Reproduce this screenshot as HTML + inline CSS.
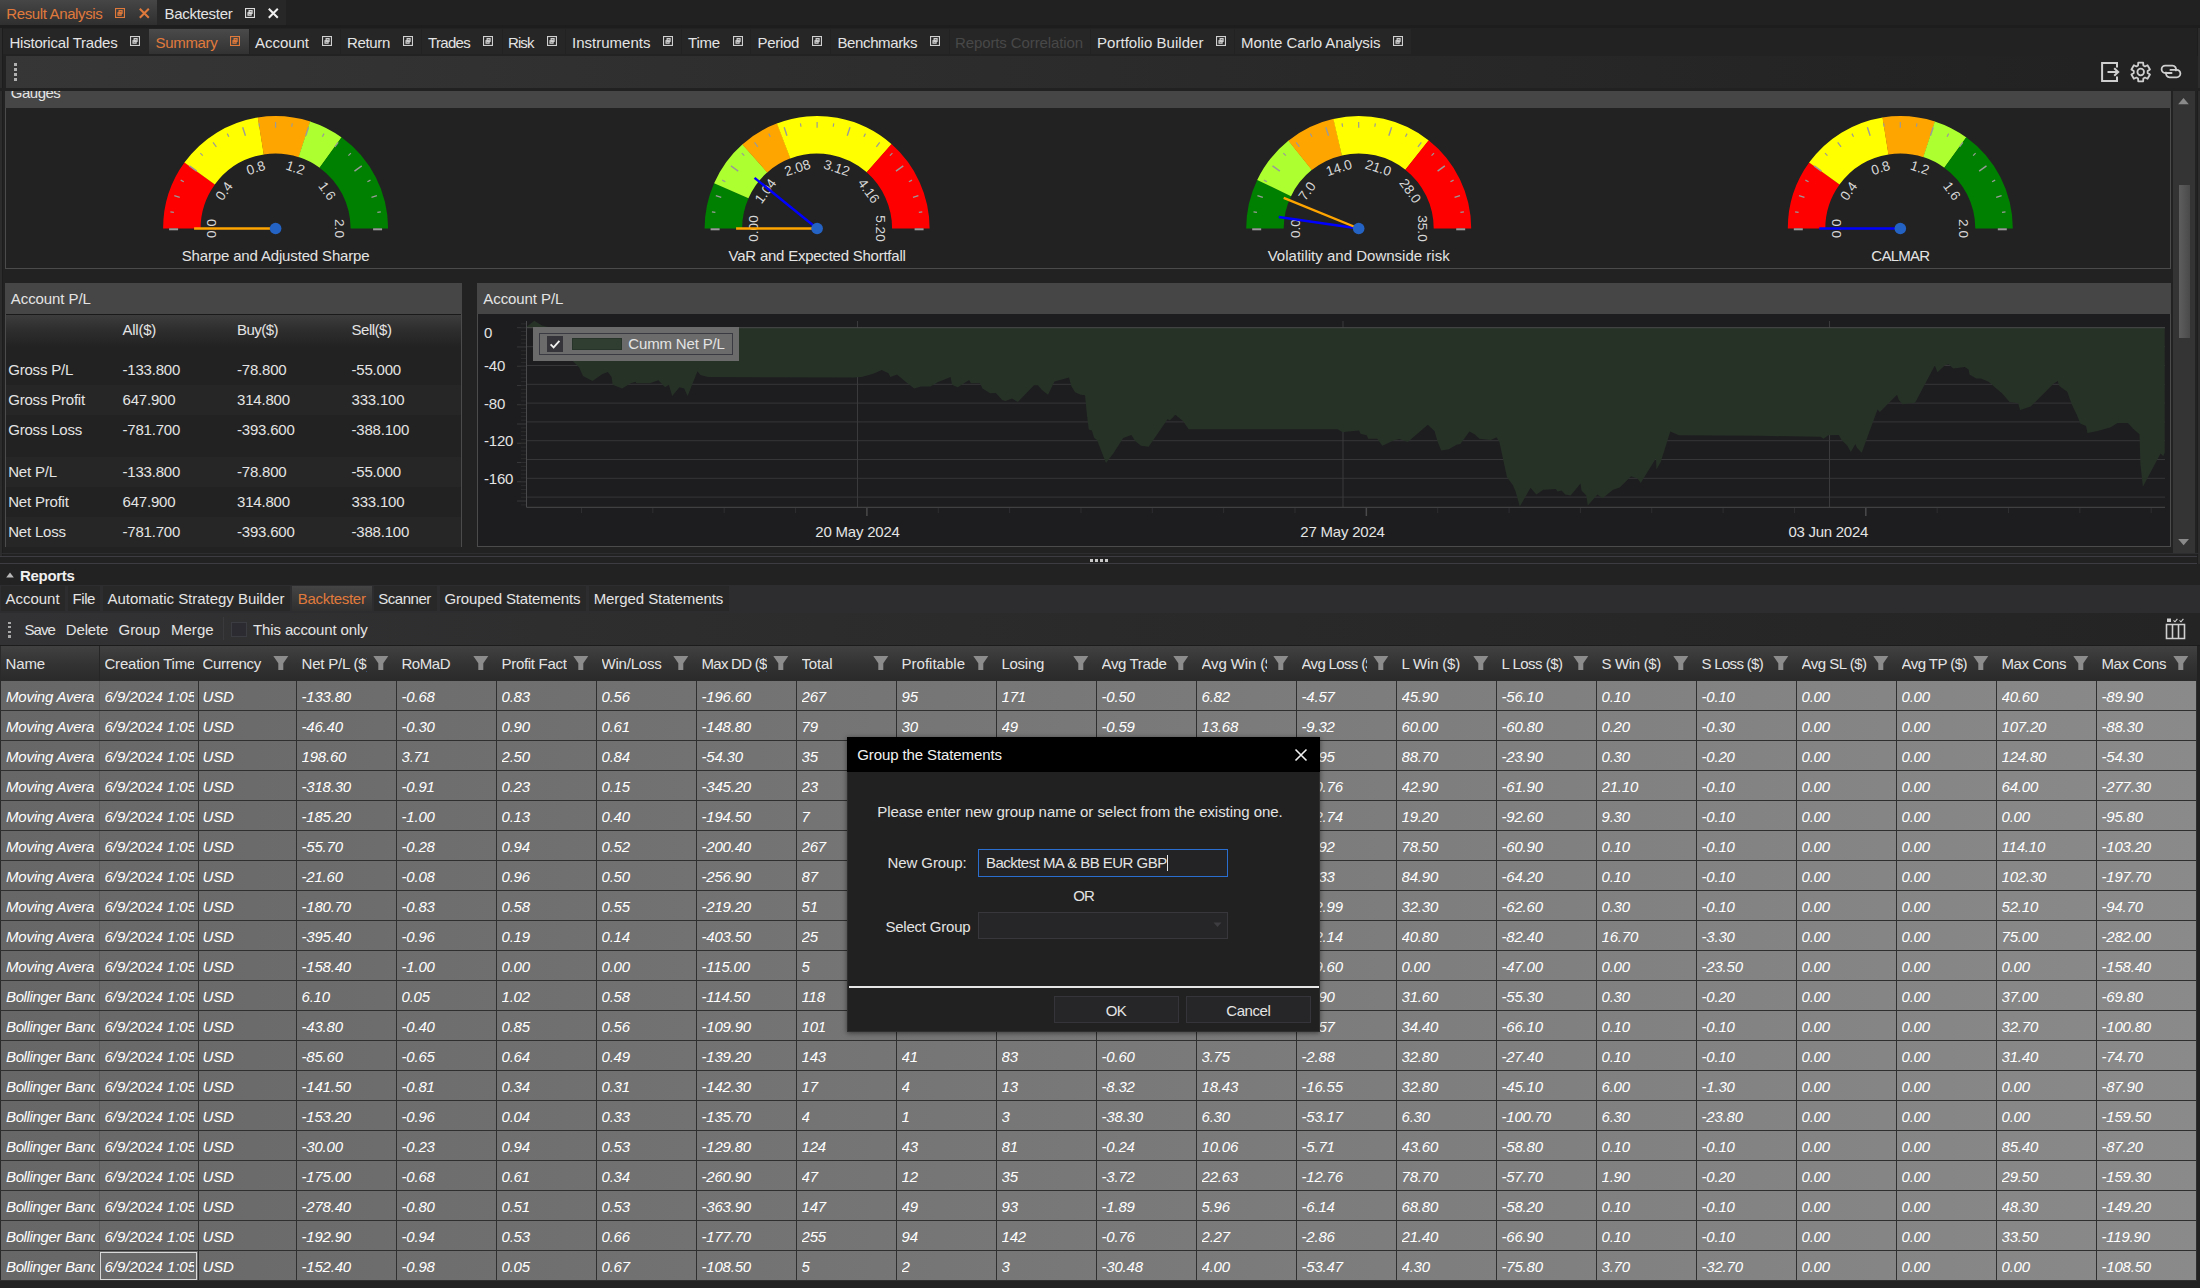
<!DOCTYPE html>
<html><head><meta charset="utf-8"><title>Result Analysis</title>
<style>
html,body{margin:0;padding:0}
body{width:2200px;height:1288px;position:relative;overflow:hidden;background:#222;font-family:"Liberation Sans",sans-serif;font-size:15px;color:#e4e4e4}
.a{position:absolute;display:block}
.t{position:absolute;white-space:pre;line-height:20px;height:20px}
</style></head><body>
<div class="a" style="left:0px;top:0px;width:2200px;height:26px;background:#212121;"></div>
<div class="a" style="left:0px;top:0px;width:157px;height:24.5px;background:linear-gradient(#464646,#2f2f2f);"></div>
<div class="a" style="left:157px;top:0px;width:129px;height:24.5px;background:#272727;"></div>
<div class="a" style="left:0px;top:24.5px;width:2200px;height:3.5px;background:#1d1d1d;"></div>
<div class="t" style="left:6.20px;top:3.60px;font-size:15px;letter-spacing:-0.361px;color:#e07a3c;">Result Analysis</div>
<svg class="a" style="left:115px;top:8px" width="10" height="10" viewBox="0 0 10 10"><rect x="0.55" y="0.55" width="8.9" height="8.9" fill="none" stroke="#e07a3c" stroke-width="1.1"/><rect x="4.1" y="2.6" width="3" height="2.8" fill="#e07a3c" fill-opacity="0.35" stroke="#e07a3c" stroke-width="1.15"/><rect x="3" y="4.7" width="3.1" height="2.5" fill="#e07a3c" fill-opacity="0.35" stroke="#e07a3c" stroke-width="1.15"/></svg>
<svg class="a" style="left:138.7px;top:7.8px" width="11" height="11" viewBox="0 0 11 11"><path d="M0.8 0.8L9.8 9.8M9.8 0.8L0.8 9.8" stroke="#e07a3c" stroke-width="2" fill="none"/></svg>
<div class="t" style="left:164.60px;top:3.60px;font-size:15px;letter-spacing:-0.306px;">Backtester</div>
<svg class="a" style="left:245px;top:8px" width="10" height="10" viewBox="0 0 10 10"><rect x="0.55" y="0.55" width="8.9" height="8.9" fill="none" stroke="#dcdcdc" stroke-width="1.1"/><rect x="4.1" y="2.6" width="3" height="2.8" fill="#dcdcdc" fill-opacity="0.35" stroke="#dcdcdc" stroke-width="1.15"/><rect x="3" y="4.7" width="3.1" height="2.5" fill="#dcdcdc" fill-opacity="0.35" stroke="#dcdcdc" stroke-width="1.15"/></svg>
<svg class="a" style="left:267.7px;top:7.8px" width="11" height="11" viewBox="0 0 11 11"><path d="M0.8 0.8L9.8 9.8M9.8 0.8L0.8 9.8" stroke="#f0f0f0" stroke-width="2" fill="none"/></svg>
<div class="a" style="left:0px;top:28px;width:2200px;height:28px;background:#222;"></div>
<div class="a" style="left:0px;top:28px;width:2px;height:528px;background:#2c2c2c;"></div>
<div class="a" style="left:2px;top:28px;width:1px;height:528px;background:#1d1d1d;"></div>
<div class="a" style="left:2197px;top:28px;width:1px;height:536px;background:#1d1d1d;"></div>
<div class="a" style="left:2198px;top:28px;width:2px;height:536px;background:#2c2c2c;"></div>
<div class="a" style="left:3px;top:29px;width:145.5px;height:25px;background:#262626;"></div>
<div class="t" style="left:9.50px;top:32.80px;font-size:15px;letter-spacing:-0.218px;">Historical Trades</div>
<svg class="a" style="left:130px;top:36px" width="10" height="10" viewBox="0 0 10 10"><rect x="0.55" y="0.55" width="8.9" height="8.9" fill="none" stroke="#d0d0d0" stroke-width="1.1"/><rect x="4.1" y="2.6" width="3" height="2.8" fill="#d0d0d0" fill-opacity="0.35" stroke="#d0d0d0" stroke-width="1.15"/><rect x="3" y="4.7" width="3.1" height="2.5" fill="#d0d0d0" fill-opacity="0.35" stroke="#d0d0d0" stroke-width="1.15"/></svg>
<div class="a" style="left:149px;top:29px;width:99.5px;height:25px;background:linear-gradient(#4a4a4a,#323232);"></div>
<div class="t" style="left:155.50px;top:32.80px;font-size:15px;letter-spacing:-0.311px;color:#e07a3c;">Summary</div>
<svg class="a" style="left:230px;top:36px" width="10" height="10" viewBox="0 0 10 10"><rect x="0.55" y="0.55" width="8.9" height="8.9" fill="none" stroke="#e07a3c" stroke-width="1.1"/><rect x="4.1" y="2.6" width="3" height="2.8" fill="#e07a3c" fill-opacity="0.35" stroke="#e07a3c" stroke-width="1.15"/><rect x="3" y="4.7" width="3.1" height="2.5" fill="#e07a3c" fill-opacity="0.35" stroke="#e07a3c" stroke-width="1.15"/></svg>
<div class="a" style="left:249.5px;top:29px;width:90.5px;height:25px;background:#262626;"></div>
<div class="t" style="left:255.00px;top:32.80px;font-size:15px;letter-spacing:-0.029px;">Account</div>
<svg class="a" style="left:321.5px;top:36px" width="10" height="10" viewBox="0 0 10 10"><rect x="0.55" y="0.55" width="8.9" height="8.9" fill="none" stroke="#d0d0d0" stroke-width="1.1"/><rect x="4.1" y="2.6" width="3" height="2.8" fill="#d0d0d0" fill-opacity="0.35" stroke="#d0d0d0" stroke-width="1.15"/><rect x="3" y="4.7" width="3.1" height="2.5" fill="#d0d0d0" fill-opacity="0.35" stroke="#d0d0d0" stroke-width="1.15"/></svg>
<div class="a" style="left:341px;top:29px;width:80px;height:25px;background:#262626;"></div>
<div class="t" style="left:347.00px;top:32.80px;font-size:15px;letter-spacing:-0.337px;">Return</div>
<svg class="a" style="left:403px;top:36px" width="10" height="10" viewBox="0 0 10 10"><rect x="0.55" y="0.55" width="8.9" height="8.9" fill="none" stroke="#d0d0d0" stroke-width="1.1"/><rect x="4.1" y="2.6" width="3" height="2.8" fill="#d0d0d0" fill-opacity="0.35" stroke="#d0d0d0" stroke-width="1.15"/><rect x="3" y="4.7" width="3.1" height="2.5" fill="#d0d0d0" fill-opacity="0.35" stroke="#d0d0d0" stroke-width="1.15"/></svg>
<div class="a" style="left:422px;top:29px;width:79.5px;height:25px;background:#262626;"></div>
<div class="t" style="left:428.00px;top:32.80px;font-size:15px;letter-spacing:-0.688px;">Trades</div>
<svg class="a" style="left:483px;top:36px" width="10" height="10" viewBox="0 0 10 10"><rect x="0.55" y="0.55" width="8.9" height="8.9" fill="none" stroke="#d0d0d0" stroke-width="1.1"/><rect x="4.1" y="2.6" width="3" height="2.8" fill="#d0d0d0" fill-opacity="0.35" stroke="#d0d0d0" stroke-width="1.15"/><rect x="3" y="4.7" width="3.1" height="2.5" fill="#d0d0d0" fill-opacity="0.35" stroke="#d0d0d0" stroke-width="1.15"/></svg>
<div class="a" style="left:502.5px;top:29px;width:62.5px;height:25px;background:#262626;"></div>
<div class="t" style="left:508.00px;top:32.80px;font-size:15px;letter-spacing:-0.916px;">Risk</div>
<svg class="a" style="left:546.5px;top:36px" width="10" height="10" viewBox="0 0 10 10"><rect x="0.55" y="0.55" width="8.9" height="8.9" fill="none" stroke="#d0d0d0" stroke-width="1.1"/><rect x="4.1" y="2.6" width="3" height="2.8" fill="#d0d0d0" fill-opacity="0.35" stroke="#d0d0d0" stroke-width="1.15"/><rect x="3" y="4.7" width="3.1" height="2.5" fill="#d0d0d0" fill-opacity="0.35" stroke="#d0d0d0" stroke-width="1.15"/></svg>
<div class="a" style="left:566px;top:29px;width:115px;height:25px;background:#262626;"></div>
<div class="t" style="left:572.00px;top:32.80px;font-size:15px;letter-spacing:0.012px;">Instruments</div>
<svg class="a" style="left:663px;top:36px" width="10" height="10" viewBox="0 0 10 10"><rect x="0.55" y="0.55" width="8.9" height="8.9" fill="none" stroke="#d0d0d0" stroke-width="1.1"/><rect x="4.1" y="2.6" width="3" height="2.8" fill="#d0d0d0" fill-opacity="0.35" stroke="#d0d0d0" stroke-width="1.15"/><rect x="3" y="4.7" width="3.1" height="2.5" fill="#d0d0d0" fill-opacity="0.35" stroke="#d0d0d0" stroke-width="1.15"/></svg>
<div class="a" style="left:682px;top:29px;width:68px;height:25px;background:#262626;"></div>
<div class="t" style="left:688.00px;top:32.80px;font-size:15px;letter-spacing:-0.194px;">Time</div>
<svg class="a" style="left:733px;top:36px" width="10" height="10" viewBox="0 0 10 10"><rect x="0.55" y="0.55" width="8.9" height="8.9" fill="none" stroke="#d0d0d0" stroke-width="1.1"/><rect x="4.1" y="2.6" width="3" height="2.8" fill="#d0d0d0" fill-opacity="0.35" stroke="#d0d0d0" stroke-width="1.15"/><rect x="3" y="4.7" width="3.1" height="2.5" fill="#d0d0d0" fill-opacity="0.35" stroke="#d0d0d0" stroke-width="1.15"/></svg>
<div class="a" style="left:751px;top:29px;width:79px;height:25px;background:#262626;"></div>
<div class="t" style="left:757.50px;top:32.80px;font-size:15px;letter-spacing:-0.310px;">Period</div>
<svg class="a" style="left:811.5px;top:36px" width="10" height="10" viewBox="0 0 10 10"><rect x="0.55" y="0.55" width="8.9" height="8.9" fill="none" stroke="#d0d0d0" stroke-width="1.1"/><rect x="4.1" y="2.6" width="3" height="2.8" fill="#d0d0d0" fill-opacity="0.35" stroke="#d0d0d0" stroke-width="1.15"/><rect x="3" y="4.7" width="3.1" height="2.5" fill="#d0d0d0" fill-opacity="0.35" stroke="#d0d0d0" stroke-width="1.15"/></svg>
<div class="a" style="left:831px;top:29px;width:117.5px;height:25px;background:#262626;"></div>
<div class="t" style="left:837.50px;top:32.80px;font-size:15px;letter-spacing:-0.387px;">Benchmarks</div>
<svg class="a" style="left:930px;top:36px" width="10" height="10" viewBox="0 0 10 10"><rect x="0.55" y="0.55" width="8.9" height="8.9" fill="none" stroke="#d0d0d0" stroke-width="1.1"/><rect x="4.1" y="2.6" width="3" height="2.8" fill="#d0d0d0" fill-opacity="0.35" stroke="#d0d0d0" stroke-width="1.15"/><rect x="3" y="4.7" width="3.1" height="2.5" fill="#d0d0d0" fill-opacity="0.35" stroke="#d0d0d0" stroke-width="1.15"/></svg>
<div class="a" style="left:949.5px;top:29px;width:140.5px;height:25px;background:#262626;"></div>
<div class="t" style="left:955.00px;top:32.80px;font-size:15px;letter-spacing:-0.108px;color:#484848;">Reports Correlation</div>
<div class="a" style="left:1091px;top:29px;width:142.5px;height:25px;background:#262626;"></div>
<div class="t" style="left:1097.00px;top:32.80px;font-size:15px;letter-spacing:0.036px;">Portfolio Builder</div>
<svg class="a" style="left:1216px;top:36px" width="10" height="10" viewBox="0 0 10 10"><rect x="0.55" y="0.55" width="8.9" height="8.9" fill="none" stroke="#d0d0d0" stroke-width="1.1"/><rect x="4.1" y="2.6" width="3" height="2.8" fill="#d0d0d0" fill-opacity="0.35" stroke="#d0d0d0" stroke-width="1.15"/><rect x="3" y="4.7" width="3.1" height="2.5" fill="#d0d0d0" fill-opacity="0.35" stroke="#d0d0d0" stroke-width="1.15"/></svg>
<div class="a" style="left:1234.5px;top:29px;width:176.5px;height:25px;background:#262626;"></div>
<div class="t" style="left:1241.00px;top:32.80px;font-size:15px;letter-spacing:-0.070px;">Monte Carlo Analysis</div>
<svg class="a" style="left:1393px;top:36px" width="10" height="10" viewBox="0 0 10 10"><rect x="0.55" y="0.55" width="8.9" height="8.9" fill="none" stroke="#d0d0d0" stroke-width="1.1"/><rect x="4.1" y="2.6" width="3" height="2.8" fill="#d0d0d0" fill-opacity="0.35" stroke="#d0d0d0" stroke-width="1.15"/><rect x="3" y="4.7" width="3.1" height="2.5" fill="#d0d0d0" fill-opacity="0.35" stroke="#d0d0d0" stroke-width="1.15"/></svg>
<div class="a" style="left:6px;top:56px;width:2192px;height:32px;background:linear-gradient(to right,#363636 0%,#2f2f2f 30%,#292929 60%,#222 95%);"></div>
<div class="a" style="left:14.1px;top:63.2px;width:2.6px;height:2.6px;background:#b0b0b0;"></div>
<div class="a" style="left:14.1px;top:68.15px;width:2.6px;height:2.6px;background:#b0b0b0;"></div>
<div class="a" style="left:14.1px;top:73.1px;width:2.6px;height:2.6px;background:#b0b0b0;"></div>
<div class="a" style="left:14.1px;top:78.05px;width:2.6px;height:2.6px;background:#b0b0b0;"></div>
<div class="a" style="left:0px;top:88px;width:2200px;height:3px;background:#212121;"></div>
<svg class="a" style="left:2098px;top:59px" width="26" height="26" viewBox="0 0 26 26"><path d="M19 8.5V4.1H4.1V21.9H19V17.5" fill="none" stroke="#cfcfcf" stroke-width="2"/><path d="M9.5 13H20M16.2 9.2L20.2 13L16.2 16.8" fill="none" stroke="#cfcfcf" stroke-width="2"/></svg>
<svg class="a" style="left:2128px;top:59px" width="26" height="26" viewBox="0 0 26 26"><path d="M10.23 3.72L15.17 3.72L15.36 6.53L16.98 7.46L19.50 6.22L21.97 10.50L19.64 12.07L19.64 13.93L21.97 15.50L19.50 19.78L16.98 18.54L15.36 19.47L15.17 22.28L10.23 22.28L10.04 19.47L8.42 18.54L5.90 19.78L3.43 15.50L5.76 13.93L5.76 12.07L3.43 10.50L5.90 6.22L8.42 7.46L10.04 6.53Z" fill="none" stroke="#cfcfcf" stroke-width="1.8" stroke-linejoin="round"/><circle cx="12.7" cy="13" r="3.3" fill="none" stroke="#cfcfcf" stroke-width="1.8"/></svg>
<svg class="a" style="left:2158px;top:60px" width="28" height="24" viewBox="0 0 28 24"><path d="M13.6 13H7.3a3.7 3.7 0 0 1 0-7.4h7.1a3.7 3.7 0 0 1 3.5 4.8" fill="none" stroke="#cfcfcf" stroke-width="1.8" stroke-linecap="round"/><path d="M12.4 9.9H18.7a3.7 3.7 0 0 1 0 7.4h-7.1a3.7 3.7 0 0 1-3.5-4.8" fill="none" stroke="#cfcfcf" stroke-width="1.8" stroke-linecap="round"/></svg>
<div class="a" style="left:5px;top:91px;width:2166px;height:177.5px;background:#222;border:1px solid #4b4b4b;box-sizing:border-box;border-top:none"></div>
<div class="a" style="left:5px;top:91px;width:2166px;height:17px;background:#464646;"></div>
<div class="a" style="left:5px;top:91px;width:300px;height:17px;overflow:hidden">
<div class="t" style="left:5.80px;top:-7.60px;font-size:15px;letter-spacing:-0.506px;">Gauges</div>
</div>
<svg class="a" style="left:0;top:100px;font-family:'Liberation Sans'" width="2200" height="170" viewBox="0 100 2200 170">
<path d="M163.10 228.50A112.5 112.5 0 0 1 184.59 162.37L214.92 184.42A75 75 0 0 0 200.60 228.50Z" fill="#ff0000"/><path d="M184.41 162.61A112.5 112.5 0 0 1 258.00 117.39L263.87 154.42A75 75 0 0 0 214.81 184.58Z" fill="#ffff00"/><path d="M257.71 117.43A112.5 112.5 0 0 1 310.36 121.51L298.78 157.17A75 75 0 0 0 263.67 154.45Z" fill="#ffa500"/><path d="M310.08 121.42A112.5 112.5 0 0 1 341.73 137.49L319.68 167.82A75 75 0 0 0 298.59 157.11Z" fill="#adff2f"/><path d="M341.49 137.31A112.5 112.5 0 0 1 388.10 228.50L350.60 228.50A75 75 0 0 0 319.52 167.71Z" fill="#008000"/><path d="M178.10 229.30L169.10 229.30" stroke="#9a9a9a" stroke-width="2"/><path d="M173.87 212.39L170.41 211.84" stroke="#9a9a9a" stroke-width="1.2"/><path d="M179.73 197.35L174.31 195.59" stroke="#9a9a9a" stroke-width="1.2"/><path d="M183.83 181.74L180.71 180.15" stroke="#9a9a9a" stroke-width="1.2"/><path d="M196.72 171.19L189.44 165.90" stroke="#9a9a9a" stroke-width="1.4"/><path d="M202.77 155.67L200.29 153.19" stroke="#9a9a9a" stroke-width="1.2"/><path d="M216.35 146.95L213.00 142.34" stroke="#9a9a9a" stroke-width="1.2"/><path d="M228.84 136.73L227.25 133.61" stroke="#9a9a9a" stroke-width="1.2"/><path d="M245.47 135.77L242.69 127.21" stroke="#9a9a9a" stroke-width="1.4"/><path d="M259.49 126.77L258.94 123.31" stroke="#9a9a9a" stroke-width="1.2"/><path d="M275.60 127.70L275.60 122.00" stroke="#9a9a9a" stroke-width="1.2"/><path d="M291.71 126.77L292.26 123.31" stroke="#9a9a9a" stroke-width="1.2"/><path d="M305.73 135.77L308.51 127.21" stroke="#9a9a9a" stroke-width="1.4"/><path d="M322.36 136.73L323.95 133.61" stroke="#9a9a9a" stroke-width="1.2"/><path d="M334.85 146.95L338.20 142.34" stroke="#9a9a9a" stroke-width="1.2"/><path d="M348.43 155.67L350.91 153.19" stroke="#9a9a9a" stroke-width="1.2"/><path d="M354.48 171.19L361.76 165.90" stroke="#9a9a9a" stroke-width="1.4"/><path d="M367.37 181.74L370.49 180.15" stroke="#9a9a9a" stroke-width="1.2"/><path d="M371.47 197.35L376.89 195.59" stroke="#9a9a9a" stroke-width="1.2"/><path d="M377.33 212.39L380.79 211.84" stroke="#9a9a9a" stroke-width="1.2"/><path d="M373.10 229.30L382.10 229.30" stroke="#9a9a9a" stroke-width="2"/><text x="211.60" y="228.50" transform="rotate(-90 211.60 228.50)" text-anchor="middle" font-size="13.6" fill="#d8d8d8" dy="4.9">0.0</text><text x="223.82" y="190.88" transform="rotate(-54 223.82 190.88)" text-anchor="middle" font-size="13.6" fill="#d8d8d8" dy="4.9">0.4</text><text x="255.82" y="167.63" transform="rotate(-18 255.82 167.63)" text-anchor="middle" font-size="13.6" fill="#d8d8d8" dy="4.9">0.8</text><text x="295.38" y="167.63" transform="rotate(18 295.38 167.63)" text-anchor="middle" font-size="13.6" fill="#d8d8d8" dy="4.9">1.2</text><text x="327.38" y="190.88" transform="rotate(54 327.38 190.88)" text-anchor="middle" font-size="13.6" fill="#d8d8d8" dy="4.9">1.6</text><text x="339.60" y="228.50" transform="rotate(90 339.60 228.50)" text-anchor="middle" font-size="13.6" fill="#d8d8d8" dy="4.9">2.0</text><path d="M275.60 228.50L194.10 228.50" stroke="#ffa500" stroke-width="2.4"/><circle cx="275.6" cy="228.5" r="5.8" fill="#2463c4"/>
<path d="M704.60 228.50A112.5 112.5 0 0 1 714.23 182.95L748.52 198.13A75 75 0 0 0 742.10 228.50Z" fill="#008000"/><path d="M714.12 183.22A112.5 112.5 0 0 1 742.50 144.29L767.37 172.36A75 75 0 0 0 748.44 198.31Z" fill="#adff2f"/><path d="M742.28 144.49A112.5 112.5 0 0 1 777.21 123.31L790.50 158.37A75 75 0 0 0 767.22 172.49Z" fill="#ffa500"/><path d="M776.93 123.42A112.5 112.5 0 0 1 891.70 144.29L866.83 172.36A75 75 0 0 0 790.32 158.44Z" fill="#ffff00"/><path d="M891.48 144.10A112.5 112.5 0 0 1 929.60 228.50L892.10 228.50A75 75 0 0 0 866.69 172.23Z" fill="#ff0000"/><path d="M719.60 229.30L710.60 229.30" stroke="#9a9a9a" stroke-width="2"/><path d="M715.37 212.39L711.91 211.84" stroke="#9a9a9a" stroke-width="1.2"/><path d="M721.23 197.35L715.81 195.59" stroke="#9a9a9a" stroke-width="1.2"/><path d="M725.33 181.74L722.21 180.15" stroke="#9a9a9a" stroke-width="1.2"/><path d="M738.22 171.19L730.94 165.90" stroke="#9a9a9a" stroke-width="1.4"/><path d="M744.27 155.67L741.79 153.19" stroke="#9a9a9a" stroke-width="1.2"/><path d="M757.85 146.95L754.50 142.34" stroke="#9a9a9a" stroke-width="1.2"/><path d="M770.34 136.73L768.75 133.61" stroke="#9a9a9a" stroke-width="1.2"/><path d="M786.97 135.77L784.19 127.21" stroke="#9a9a9a" stroke-width="1.4"/><path d="M800.99 126.77L800.44 123.31" stroke="#9a9a9a" stroke-width="1.2"/><path d="M817.10 127.70L817.10 122.00" stroke="#9a9a9a" stroke-width="1.2"/><path d="M833.21 126.77L833.76 123.31" stroke="#9a9a9a" stroke-width="1.2"/><path d="M847.23 135.77L850.01 127.21" stroke="#9a9a9a" stroke-width="1.4"/><path d="M863.86 136.73L865.45 133.61" stroke="#9a9a9a" stroke-width="1.2"/><path d="M876.35 146.95L879.70 142.34" stroke="#9a9a9a" stroke-width="1.2"/><path d="M889.93 155.67L892.41 153.19" stroke="#9a9a9a" stroke-width="1.2"/><path d="M895.98 171.19L903.26 165.90" stroke="#9a9a9a" stroke-width="1.4"/><path d="M908.87 181.74L911.99 180.15" stroke="#9a9a9a" stroke-width="1.2"/><path d="M912.97 197.35L918.39 195.59" stroke="#9a9a9a" stroke-width="1.2"/><path d="M918.83 212.39L922.29 211.84" stroke="#9a9a9a" stroke-width="1.2"/><path d="M914.60 229.30L923.60 229.30" stroke="#9a9a9a" stroke-width="2"/><text x="753.10" y="228.50" transform="rotate(-90 753.10 228.50)" text-anchor="middle" font-size="13.6" fill="#d8d8d8" dy="4.9">0.00</text><text x="765.32" y="190.88" transform="rotate(-54 765.32 190.88)" text-anchor="middle" font-size="13.6" fill="#d8d8d8" dy="4.9">1.04</text><text x="797.32" y="167.63" transform="rotate(-18 797.32 167.63)" text-anchor="middle" font-size="13.6" fill="#d8d8d8" dy="4.9">2.08</text><text x="836.88" y="167.63" transform="rotate(18 836.88 167.63)" text-anchor="middle" font-size="13.6" fill="#d8d8d8" dy="4.9">3.12</text><text x="868.88" y="190.88" transform="rotate(54 868.88 190.88)" text-anchor="middle" font-size="13.6" fill="#d8d8d8" dy="4.9">4.16</text><text x="881.10" y="228.50" transform="rotate(90 881.10 228.50)" text-anchor="middle" font-size="13.6" fill="#d8d8d8" dy="4.9">5.20</text><path d="M817.10 228.50L736.10 228.50" stroke="#ffa500" stroke-width="2.4"/><path d="M817.10 228.50L754.54 177.84" stroke="#0000ff" stroke-width="2.4"/><circle cx="817.1" cy="228.5" r="5.8" fill="#2463c4"/>
<path d="M1246.20 228.50A112.5 112.5 0 0 1 1257.34 179.69L1291.13 195.96A75 75 0 0 0 1283.70 228.50Z" fill="#008000"/><path d="M1257.21 179.95A112.5 112.5 0 0 1 1288.56 140.54L1311.94 169.86A75 75 0 0 0 1291.04 196.14Z" fill="#adff2f"/><path d="M1288.33 140.73A112.5 112.5 0 0 1 1333.67 118.82L1342.01 155.38A75 75 0 0 0 1311.78 169.99Z" fill="#ffa500"/><path d="M1333.38 118.89A112.5 112.5 0 0 1 1428.84 140.54L1405.46 169.86A75 75 0 0 0 1341.82 155.42Z" fill="#ffff00"/><path d="M1428.61 140.36A112.5 112.5 0 0 1 1471.20 228.50L1433.70 228.50A75 75 0 0 0 1405.31 169.74Z" fill="#ff0000"/><path d="M1261.20 229.30L1252.20 229.30" stroke="#9a9a9a" stroke-width="2"/><path d="M1256.97 212.39L1253.51 211.84" stroke="#9a9a9a" stroke-width="1.2"/><path d="M1262.83 197.35L1257.41 195.59" stroke="#9a9a9a" stroke-width="1.2"/><path d="M1266.93 181.74L1263.81 180.15" stroke="#9a9a9a" stroke-width="1.2"/><path d="M1279.82 171.19L1272.54 165.90" stroke="#9a9a9a" stroke-width="1.4"/><path d="M1285.87 155.67L1283.39 153.19" stroke="#9a9a9a" stroke-width="1.2"/><path d="M1299.45 146.95L1296.10 142.34" stroke="#9a9a9a" stroke-width="1.2"/><path d="M1311.94 136.73L1310.35 133.61" stroke="#9a9a9a" stroke-width="1.2"/><path d="M1328.57 135.77L1325.79 127.21" stroke="#9a9a9a" stroke-width="1.4"/><path d="M1342.59 126.77L1342.04 123.31" stroke="#9a9a9a" stroke-width="1.2"/><path d="M1358.70 127.70L1358.70 122.00" stroke="#9a9a9a" stroke-width="1.2"/><path d="M1374.81 126.77L1375.36 123.31" stroke="#9a9a9a" stroke-width="1.2"/><path d="M1388.83 135.77L1391.61 127.21" stroke="#9a9a9a" stroke-width="1.4"/><path d="M1405.46 136.73L1407.05 133.61" stroke="#9a9a9a" stroke-width="1.2"/><path d="M1417.95 146.95L1421.30 142.34" stroke="#9a9a9a" stroke-width="1.2"/><path d="M1431.53 155.67L1434.01 153.19" stroke="#9a9a9a" stroke-width="1.2"/><path d="M1437.58 171.19L1444.86 165.90" stroke="#9a9a9a" stroke-width="1.4"/><path d="M1450.47 181.74L1453.59 180.15" stroke="#9a9a9a" stroke-width="1.2"/><path d="M1454.57 197.35L1459.99 195.59" stroke="#9a9a9a" stroke-width="1.2"/><path d="M1460.43 212.39L1463.89 211.84" stroke="#9a9a9a" stroke-width="1.2"/><path d="M1456.20 229.30L1465.20 229.30" stroke="#9a9a9a" stroke-width="2"/><text x="1294.70" y="228.50" transform="rotate(-90 1294.70 228.50)" text-anchor="middle" font-size="13.6" fill="#d8d8d8" dy="4.9">0.0</text><text x="1306.92" y="190.88" transform="rotate(-54 1306.92 190.88)" text-anchor="middle" font-size="13.6" fill="#d8d8d8" dy="4.9">7.0</text><text x="1338.92" y="167.63" transform="rotate(-18 1338.92 167.63)" text-anchor="middle" font-size="13.6" fill="#d8d8d8" dy="4.9">14.0</text><text x="1378.48" y="167.63" transform="rotate(18 1378.48 167.63)" text-anchor="middle" font-size="13.6" fill="#d8d8d8" dy="4.9">21.0</text><text x="1410.48" y="190.88" transform="rotate(54 1410.48 190.88)" text-anchor="middle" font-size="13.6" fill="#d8d8d8" dy="4.9">28.0</text><text x="1422.70" y="228.50" transform="rotate(90 1422.70 228.50)" text-anchor="middle" font-size="13.6" fill="#d8d8d8" dy="4.9">35.0</text><path d="M1358.70 228.50L1278.73 216.98" stroke="#0000ff" stroke-width="2.4"/><path d="M1358.70 228.50L1283.70 197.89" stroke="#ffa500" stroke-width="2.4"/><circle cx="1358.7" cy="228.5" r="5.8" fill="#2463c4"/>
<path d="M1787.80 228.50A112.5 112.5 0 0 1 1809.29 162.37L1839.62 184.42A75 75 0 0 0 1825.30 228.50Z" fill="#ff0000"/><path d="M1809.11 162.61A112.5 112.5 0 0 1 1882.70 117.39L1888.57 154.42A75 75 0 0 0 1839.51 184.58Z" fill="#ffff00"/><path d="M1882.41 117.43A112.5 112.5 0 0 1 1935.06 121.51L1923.48 157.17A75 75 0 0 0 1888.37 154.45Z" fill="#ffa500"/><path d="M1934.78 121.42A112.5 112.5 0 0 1 1966.43 137.49L1944.38 167.82A75 75 0 0 0 1923.29 157.11Z" fill="#adff2f"/><path d="M1966.19 137.31A112.5 112.5 0 0 1 2012.80 228.50L1975.30 228.50A75 75 0 0 0 1944.22 167.71Z" fill="#008000"/><path d="M1802.80 229.30L1793.80 229.30" stroke="#9a9a9a" stroke-width="2"/><path d="M1798.57 212.39L1795.11 211.84" stroke="#9a9a9a" stroke-width="1.2"/><path d="M1804.43 197.35L1799.01 195.59" stroke="#9a9a9a" stroke-width="1.2"/><path d="M1808.53 181.74L1805.41 180.15" stroke="#9a9a9a" stroke-width="1.2"/><path d="M1821.42 171.19L1814.14 165.90" stroke="#9a9a9a" stroke-width="1.4"/><path d="M1827.47 155.67L1824.99 153.19" stroke="#9a9a9a" stroke-width="1.2"/><path d="M1841.05 146.95L1837.70 142.34" stroke="#9a9a9a" stroke-width="1.2"/><path d="M1853.54 136.73L1851.95 133.61" stroke="#9a9a9a" stroke-width="1.2"/><path d="M1870.17 135.77L1867.39 127.21" stroke="#9a9a9a" stroke-width="1.4"/><path d="M1884.19 126.77L1883.64 123.31" stroke="#9a9a9a" stroke-width="1.2"/><path d="M1900.30 127.70L1900.30 122.00" stroke="#9a9a9a" stroke-width="1.2"/><path d="M1916.41 126.77L1916.96 123.31" stroke="#9a9a9a" stroke-width="1.2"/><path d="M1930.43 135.77L1933.21 127.21" stroke="#9a9a9a" stroke-width="1.4"/><path d="M1947.06 136.73L1948.65 133.61" stroke="#9a9a9a" stroke-width="1.2"/><path d="M1959.55 146.95L1962.90 142.34" stroke="#9a9a9a" stroke-width="1.2"/><path d="M1973.13 155.67L1975.61 153.19" stroke="#9a9a9a" stroke-width="1.2"/><path d="M1979.18 171.19L1986.46 165.90" stroke="#9a9a9a" stroke-width="1.4"/><path d="M1992.07 181.74L1995.19 180.15" stroke="#9a9a9a" stroke-width="1.2"/><path d="M1996.17 197.35L2001.59 195.59" stroke="#9a9a9a" stroke-width="1.2"/><path d="M2002.03 212.39L2005.49 211.84" stroke="#9a9a9a" stroke-width="1.2"/><path d="M1997.80 229.30L2006.80 229.30" stroke="#9a9a9a" stroke-width="2"/><text x="1836.30" y="228.50" transform="rotate(-90 1836.30 228.50)" text-anchor="middle" font-size="13.6" fill="#d8d8d8" dy="4.9">0.0</text><text x="1848.52" y="190.88" transform="rotate(-54 1848.52 190.88)" text-anchor="middle" font-size="13.6" fill="#d8d8d8" dy="4.9">0.4</text><text x="1880.52" y="167.63" transform="rotate(-18 1880.52 167.63)" text-anchor="middle" font-size="13.6" fill="#d8d8d8" dy="4.9">0.8</text><text x="1920.08" y="167.63" transform="rotate(18 1920.08 167.63)" text-anchor="middle" font-size="13.6" fill="#d8d8d8" dy="4.9">1.2</text><text x="1952.08" y="190.88" transform="rotate(54 1952.08 190.88)" text-anchor="middle" font-size="13.6" fill="#d8d8d8" dy="4.9">1.6</text><text x="1964.30" y="228.50" transform="rotate(90 1964.30 228.50)" text-anchor="middle" font-size="13.6" fill="#d8d8d8" dy="4.9">2.0</text><path d="M1900.30 228.50L1819.30 228.50" stroke="#0000ff" stroke-width="2.4"/><circle cx="1900.3" cy="228.5" r="5.8" fill="#2463c4"/>
</svg>
<div class="t" style="left:181.70px;top:246.10px;font-size:15px;letter-spacing:-0.155px;">Sharpe and Adjusted Sharpe</div>
<div class="t" style="left:728.60px;top:246.10px;font-size:15px;letter-spacing:-0.237px;">VaR and Expected Shortfall</div>
<div class="t" style="left:1267.70px;top:246.10px;font-size:15px;letter-spacing:0.009px;">Volatility and Downside risk</div>
<div class="t" style="left:1871.30px;top:246.10px;font-size:15px;letter-spacing:-0.752px;">CALMAR</div>
<div class="a" style="left:2173px;top:91px;width:22px;height:462px;background:#343434;"></div>
<div class="a" style="left:2178.5px;top:185px;width:11px;height:153px;background:linear-gradient(to right,#5e5e5e,#4a4a4a);"></div>
<svg class="a" style="left:2173px;top:91px" width="22" height="465"><path d="M5.2 13.2L10.5 7.1L15.8 13.2Z" fill="#8a8a8a"/><path d="M5.2 448L10.6 454.2L16 448Z" fill="#8a8a8a"/></svg>
<div class="a" style="left:5px;top:283px;width:457px;height:263.5px;background:#222;border:1px solid #4b4b4b;box-sizing:border-box"></div>
<div class="a" style="left:5px;top:283px;width:457px;height:31px;background:#464646;"></div>
<div class="a" style="left:6px;top:314px;width:455px;height:1px;background:#1a1a1a;"></div>
<div class="a" style="left:6px;top:315px;width:455px;height:32px;background:linear-gradient(#3d3d3d,#2e2e2e 45%,#222 100%);"></div>
<div class="t" style="left:10.80px;top:289.00px;font-size:15px;letter-spacing:-0.080px;">Account P/L</div>
<div class="t" style="left:122.50px;top:319.60px;font-size:15px;letter-spacing:-0.251px;">All($)</div>
<div class="t" style="left:237.00px;top:319.60px;font-size:15px;letter-spacing:-0.530px;">Buy($)</div>
<div class="t" style="left:351.50px;top:319.60px;font-size:15px;letter-spacing:-0.478px;">Sell($)</div>
<div class="t" style="left:8.20px;top:359.80px;font-size:15px;letter-spacing:-0.200px;">Gross P/L</div>
<div class="t" style="left:122.50px;top:359.80px;font-size:15px;letter-spacing:-0.200px;">-133.800</div>
<div class="t" style="left:237.00px;top:359.80px;font-size:15px;letter-spacing:-0.200px;">-78.800</div>
<div class="t" style="left:351.50px;top:359.80px;font-size:15px;letter-spacing:-0.200px;">-55.000</div>
<div class="a" style="left:6px;top:385px;width:455px;height:30px;background:#262626;"></div>
<div class="t" style="left:8.20px;top:389.80px;font-size:15px;letter-spacing:-0.200px;">Gross Profit</div>
<div class="t" style="left:122.50px;top:389.80px;font-size:15px;letter-spacing:-0.200px;">647.900</div>
<div class="t" style="left:237.00px;top:389.80px;font-size:15px;letter-spacing:-0.200px;">314.800</div>
<div class="t" style="left:351.50px;top:389.80px;font-size:15px;letter-spacing:-0.200px;">333.100</div>
<div class="t" style="left:8.20px;top:419.80px;font-size:15px;letter-spacing:-0.200px;">Gross Loss</div>
<div class="t" style="left:122.50px;top:419.80px;font-size:15px;letter-spacing:-0.200px;">-781.700</div>
<div class="t" style="left:237.00px;top:419.80px;font-size:15px;letter-spacing:-0.200px;">-393.600</div>
<div class="t" style="left:351.50px;top:419.80px;font-size:15px;letter-spacing:-0.200px;">-388.100</div>
<div class="a" style="left:6px;top:457px;width:455px;height:30px;background:#262626;"></div>
<div class="t" style="left:8.20px;top:461.80px;font-size:15px;letter-spacing:-0.200px;">Net P/L</div>
<div class="t" style="left:122.50px;top:461.80px;font-size:15px;letter-spacing:-0.200px;">-133.800</div>
<div class="t" style="left:237.00px;top:461.80px;font-size:15px;letter-spacing:-0.200px;">-78.800</div>
<div class="t" style="left:351.50px;top:461.80px;font-size:15px;letter-spacing:-0.200px;">-55.000</div>
<div class="t" style="left:8.20px;top:491.80px;font-size:15px;letter-spacing:-0.200px;">Net Profit</div>
<div class="t" style="left:122.50px;top:491.80px;font-size:15px;letter-spacing:-0.200px;">647.900</div>
<div class="t" style="left:237.00px;top:491.80px;font-size:15px;letter-spacing:-0.200px;">314.800</div>
<div class="t" style="left:351.50px;top:491.80px;font-size:15px;letter-spacing:-0.200px;">333.100</div>
<div class="a" style="left:6px;top:517px;width:455px;height:30px;background:#262626;"></div>
<div class="t" style="left:8.20px;top:521.80px;font-size:15px;letter-spacing:-0.200px;">Net Loss</div>
<div class="t" style="left:122.50px;top:521.80px;font-size:15px;letter-spacing:-0.200px;">-781.700</div>
<div class="t" style="left:237.00px;top:521.80px;font-size:15px;letter-spacing:-0.200px;">-393.600</div>
<div class="t" style="left:351.50px;top:521.80px;font-size:15px;letter-spacing:-0.200px;">-388.100</div>
<div class="a" style="left:477px;top:283px;width:1694px;height:263.5px;background:#1d1d1f;border:1px solid #4b4b4b;box-sizing:border-box"></div>
<div class="a" style="left:477px;top:283px;width:1694px;height:31px;background:#464646;"></div>
<div class="t" style="left:483.30px;top:289.00px;font-size:15px;letter-spacing:-0.080px;">Account P/L</div>
<svg class="a" style="left:478px;top:315px" width="1692" height="231" viewBox="478 315 1692 231"><path d="M527 346.70H2165" stroke="#363638" stroke-width="1"/><path d="M527 365.50H2165" stroke="#363638" stroke-width="1"/><path d="M527 384.30H2165" stroke="#363638" stroke-width="1"/><path d="M527 403.10H2165" stroke="#363638" stroke-width="1"/><path d="M527 421.90H2165" stroke="#363638" stroke-width="1"/><path d="M527 440.70H2165" stroke="#363638" stroke-width="1"/><path d="M527 459.50H2165" stroke="#363638" stroke-width="1"/><path d="M527 478.30H2165" stroke="#363638" stroke-width="1"/><path d="M527 497.10H2165" stroke="#363638" stroke-width="1"/><path d="M857.5 321V507" stroke="#3a3a3c" stroke-width="1"/><path d="M1343 321V507" stroke="#3a3a3c" stroke-width="1"/><path d="M1829.5 321V507" stroke="#3a3a3c" stroke-width="1"/><path d="M526.7 327.7L526.7 326.8L534.3 320.7L542.0 325.5L548.0 327.0L560.0 345.0L572.5 360.8L579.2 367.5L583.0 376.0L592.5 380.9L602.0 374.2L607.8 371.9L611.6 377.0L612.6 384.7L622.1 388.5L630.7 383.3L635.5 381.8L636.5 383.3L649.8 383.3L658.4 380.3L665.1 387.2L668.9 384.7L672.2 396.1L679.4 387.2L684.2 388.5L687.6 396.1L697.5 371.3L700.4 375.1L708.0 377.0L854.1 377.6L861.7 377.0L873.2 373.8L881.8 370.0L888.5 373.2L890.4 377.0L897.0 374.6L905.6 381.8L914.2 388.5L920.9 386.6L930.5 386.6L937.6 382.2L950.6 377.0L952.0 384.7L957.7 387.2L969.1 379.9L971.0 383.3L980.0 383.3L982.5 388.5L990.1 393.3L995.9 392.9L1002.2 400.0L1005.4 400.9L1012.1 398.6L1017.8 401.9L1034.0 385.3L1037.9 385.3L1041.7 389.8L1048.0 394.8L1054.5 381.4L1069.0 377.6L1071.3 386.0L1075.1 392.3L1080.8 394.8L1085.0 395.2L1086.9 414.3L1088.8 429.5L1091.9 430.5L1094.2 438.1L1097.0 440.0L1106.0 463.0L1113.3 453.4L1123.2 438.1L1131.4 434.9L1135.2 441.0L1141.0 445.8L1148.6 446.7L1167.7 419.0L1169.6 420.4L1175.3 414.7L1183.0 421.0L1188.7 429.2L1337.6 429.2L1343.3 432.4L1345.7 431.8L1359.1 430.5L1360.6 433.7L1366.7 435.3L1368.3 438.7L1377.2 438.7L1382.4 445.8L1393.5 440.6L1399.2 439.1L1407.8 442.0L1427.8 424.8L1434.5 431.1L1437.4 441.0L1441.2 450.5L1448.8 449.2L1456.5 444.8L1460.3 443.9L1469.4 431.5L1474.6 434.3L1479.4 438.7L1486.0 439.5L1490.8 440.0L1496.5 437.2L1499.4 442.0L1507.0 477.3L1512.8 484.9L1515.6 491.6L1519.8 506.5L1530.5 487.8L1536.3 494.5L1543.3 489.7L1555.7 489.1L1557.6 491.6L1561.5 490.6L1565.3 494.5L1570.6 495.4L1580.5 483.4L1581.5 490.6L1586.3 495.4L1587.8 505.5L1597.4 494.5L1602.5 498.3L1613.0 489.7L1619.7 487.4L1631.1 476.3L1637.8 478.8L1640.7 483.0L1656.0 458.2L1656.5 469.3L1660.7 462.0L1670.3 431.5L1678.9 435.3L1760.0 435.8L1820.6 436.8L1823.5 438.7L1828.3 435.3L1838.8 434.9L1841.6 440.0L1847.4 445.8L1850.8 452.1L1855.4 443.9L1856.9 447.7L1861.7 452.8L1877.5 409.5L1879.8 412.0L1897.0 394.8L1898.9 400.0L1902.7 404.3L1915.1 402.8L1934.8 365.6L1937.5 372.3L1944.7 365.6L1948.5 364.3L1953.3 368.5L1964.8 366.9L1968.6 369.4L1969.5 374.6L1976.2 378.4L1981.0 378.4L1988.6 381.8L1993.4 386.0L2002.0 393.3L2009.6 401.9L2018.2 403.2L2020.1 410.1L2030.6 406.6L2053.5 383.7L2057.7 380.9L2059.3 386.0L2067.3 391.7L2071.7 404.3L2076.8 414.7L2080.3 423.4L2086.0 426.1L2087.5 433.0L2097.5 431.1L2110.8 427.3L2117.5 422.9L2128.0 422.9L2133.7 429.2L2139.5 434.3L2140.4 463.9L2142.9 486.8L2160.5 453.4L2163.3 456.3L2164.7 452.5L2164.7 327.7Z" fill="#273227"/><path d="M527 327.7H2165" stroke="#4a4a4a" stroke-width="1"/><path d="M526.5 321V507.3H2165" fill="none" stroke="#4a4a4c" stroke-width="1"/><path d="M517 327.70H526" stroke="#38383a" stroke-width="1"/><path d="M517 346.96H526" stroke="#38383a" stroke-width="1"/><path d="M517 366.22H526" stroke="#38383a" stroke-width="1"/><path d="M517 385.48H526" stroke="#38383a" stroke-width="1"/><path d="M517 404.74H526" stroke="#38383a" stroke-width="1"/><path d="M517 424.00H526" stroke="#38383a" stroke-width="1"/><path d="M517 443.26H526" stroke="#38383a" stroke-width="1"/><path d="M517 462.52H526" stroke="#38383a" stroke-width="1"/><path d="M517 481.78H526" stroke="#38383a" stroke-width="1"/><path d="M517 501.04H526" stroke="#38383a" stroke-width="1"/><path d="M521 323.85H526" stroke="#2c2c2e" stroke-width="1"/><path d="M521 327.70H526" stroke="#2c2c2e" stroke-width="1"/><path d="M521 331.55H526" stroke="#2c2c2e" stroke-width="1"/><path d="M521 335.41H526" stroke="#2c2c2e" stroke-width="1"/><path d="M521 339.26H526" stroke="#2c2c2e" stroke-width="1"/><path d="M521 343.11H526" stroke="#2c2c2e" stroke-width="1"/><path d="M521 346.96H526" stroke="#2c2c2e" stroke-width="1"/><path d="M521 350.81H526" stroke="#2c2c2e" stroke-width="1"/><path d="M521 354.67H526" stroke="#2c2c2e" stroke-width="1"/><path d="M521 358.52H526" stroke="#2c2c2e" stroke-width="1"/><path d="M521 362.37H526" stroke="#2c2c2e" stroke-width="1"/><path d="M521 366.22H526" stroke="#2c2c2e" stroke-width="1"/><path d="M521 370.07H526" stroke="#2c2c2e" stroke-width="1"/><path d="M521 373.93H526" stroke="#2c2c2e" stroke-width="1"/><path d="M521 377.78H526" stroke="#2c2c2e" stroke-width="1"/><path d="M521 381.63H526" stroke="#2c2c2e" stroke-width="1"/><path d="M521 385.48H526" stroke="#2c2c2e" stroke-width="1"/><path d="M521 389.33H526" stroke="#2c2c2e" stroke-width="1"/><path d="M521 393.19H526" stroke="#2c2c2e" stroke-width="1"/><path d="M521 397.04H526" stroke="#2c2c2e" stroke-width="1"/><path d="M521 400.89H526" stroke="#2c2c2e" stroke-width="1"/><path d="M521 404.74H526" stroke="#2c2c2e" stroke-width="1"/><path d="M521 408.59H526" stroke="#2c2c2e" stroke-width="1"/><path d="M521 412.45H526" stroke="#2c2c2e" stroke-width="1"/><path d="M521 416.30H526" stroke="#2c2c2e" stroke-width="1"/><path d="M521 420.15H526" stroke="#2c2c2e" stroke-width="1"/><path d="M521 424.00H526" stroke="#2c2c2e" stroke-width="1"/><path d="M521 427.85H526" stroke="#2c2c2e" stroke-width="1"/><path d="M521 431.71H526" stroke="#2c2c2e" stroke-width="1"/><path d="M521 435.56H526" stroke="#2c2c2e" stroke-width="1"/><path d="M521 439.41H526" stroke="#2c2c2e" stroke-width="1"/><path d="M521 443.26H526" stroke="#2c2c2e" stroke-width="1"/><path d="M521 447.11H526" stroke="#2c2c2e" stroke-width="1"/><path d="M521 450.97H526" stroke="#2c2c2e" stroke-width="1"/><path d="M521 454.82H526" stroke="#2c2c2e" stroke-width="1"/><path d="M521 458.67H526" stroke="#2c2c2e" stroke-width="1"/><path d="M521 462.52H526" stroke="#2c2c2e" stroke-width="1"/><path d="M521 466.37H526" stroke="#2c2c2e" stroke-width="1"/><path d="M521 470.23H526" stroke="#2c2c2e" stroke-width="1"/><path d="M521 474.08H526" stroke="#2c2c2e" stroke-width="1"/><path d="M521 477.93H526" stroke="#2c2c2e" stroke-width="1"/><path d="M521 481.78H526" stroke="#2c2c2e" stroke-width="1"/><path d="M521 485.63H526" stroke="#2c2c2e" stroke-width="1"/><path d="M521 489.49H526" stroke="#2c2c2e" stroke-width="1"/><path d="M521 493.34H526" stroke="#2c2c2e" stroke-width="1"/><path d="M521 497.19H526" stroke="#2c2c2e" stroke-width="1"/><path d="M521 501.04H526" stroke="#2c2c2e" stroke-width="1"/><path d="M521 504.89H526" stroke="#2c2c2e" stroke-width="1"/><path d="M581.50 508V513" stroke="#2e2e31" stroke-width="1"/><path d="M652.85 508V513" stroke="#2e2e31" stroke-width="1"/><path d="M724.20 508V513" stroke="#2e2e31" stroke-width="1"/><path d="M795.55 508V513" stroke="#2e2e31" stroke-width="1"/><path d="M866.90 508V516" stroke="#4a4a4c" stroke-width="1.5"/><path d="M938.25 508V513" stroke="#2e2e31" stroke-width="1"/><path d="M1009.60 508V513" stroke="#2e2e31" stroke-width="1"/><path d="M1080.95 508V513" stroke="#2e2e31" stroke-width="1"/><path d="M1152.30 508V513" stroke="#2e2e31" stroke-width="1"/><path d="M1223.65 508V513" stroke="#2e2e31" stroke-width="1"/><path d="M1295.00 508V513" stroke="#2e2e31" stroke-width="1"/><path d="M1366.35 508V516" stroke="#4a4a4c" stroke-width="1.5"/><path d="M1437.70 508V513" stroke="#2e2e31" stroke-width="1"/><path d="M1509.05 508V513" stroke="#2e2e31" stroke-width="1"/><path d="M1580.40 508V513" stroke="#2e2e31" stroke-width="1"/><path d="M1651.75 508V513" stroke="#2e2e31" stroke-width="1"/><path d="M1723.10 508V513" stroke="#2e2e31" stroke-width="1"/><path d="M1794.45 508V513" stroke="#2e2e31" stroke-width="1"/><path d="M1865.80 508V516" stroke="#4a4a4c" stroke-width="1.5"/><path d="M1937.15 508V513" stroke="#2e2e31" stroke-width="1"/><path d="M2008.50 508V513" stroke="#2e2e31" stroke-width="1"/><path d="M2079.85 508V513" stroke="#2e2e31" stroke-width="1"/><path d="M2151.20 508V513" stroke="#2e2e31" stroke-width="1"/></svg>
<div class="t" style="left:484.00px;top:322.60px;font-size:15px;letter-spacing:-0.200px;">0</div>
<div class="t" style="left:484.00px;top:355.70px;font-size:15px;letter-spacing:-0.200px;">-40</div>
<div class="t" style="left:484.00px;top:393.50px;font-size:15px;letter-spacing:-0.200px;">-80</div>
<div class="t" style="left:484.00px;top:431.00px;font-size:15px;letter-spacing:-0.200px;">-120</div>
<div class="t" style="left:484.00px;top:468.50px;font-size:15px;letter-spacing:-0.200px;">-160</div>
<div class="t" style="left:815.25px;top:521.60px;font-size:15px;letter-spacing:-0.203px;">20 May 2024</div>
<div class="t" style="left:1300.25px;top:521.60px;font-size:15px;letter-spacing:-0.203px;">27 May 2024</div>
<div class="t" style="left:1788.55px;top:521.60px;font-size:15px;letter-spacing:-0.280px;">03 Jun 2024</div>
<div class="a" style="left:533px;top:327px;width:206px;height:34px;background:#6b6b6b;"></div>
<div class="a" style="left:539px;top:333px;width:194px;height:22px;background:transparent;border:1px solid #3a3a42;box-sizing:border-box"></div>
<div class="a" style="left:547px;top:336px;width:16px;height:16px;background:#34343a;"></div>
<svg class="a" style="left:547px;top:336px" width="16" height="16"><path d="M3.6 8.4L6.6 11.4L12.4 4.8" fill="none" stroke="#f0f0f0" stroke-width="1.8"/></svg>
<div class="a" style="left:572px;top:338px;width:50px;height:12px;background:#303d31;border:1px solid #27342a;box-sizing:border-box"></div>
<div class="t" style="left:628.30px;top:334.30px;font-size:15px;letter-spacing:-0.155px;">Cumm Net P/L</div>
<div class="a" style="left:0px;top:553px;width:2200px;height:1px;background:#2d2d2f;"></div>
<div class="a" style="left:0px;top:556px;width:2197px;height:1px;background:#3c3c42;"></div>
<div class="a" style="left:0px;top:563px;width:2197px;height:1px;background:#3c3c42;"></div>
<div class="a" style="left:1090px;top:559px;width:3px;height:3px;background:#c8c8c8;"></div>
<div class="a" style="left:1095px;top:559px;width:3px;height:3px;background:#c8c8c8;"></div>
<div class="a" style="left:1100px;top:559px;width:3px;height:3px;background:#c8c8c8;"></div>
<div class="a" style="left:1105px;top:559px;width:3px;height:3px;background:#c8c8c8;"></div>
<div class="a" style="left:0px;top:564px;width:2200px;height:22px;background:#222;"></div>
<svg class="a" style="left:5px;top:571px" width="10" height="8"><path d="M1.2 6.4L5 1.4L8.8 6.4Z" fill="#b8b8b8"/></svg>
<div class="t" style="left:20.00px;top:565.80px;font-size:15px;letter-spacing:-0.311px;color:#f0f0f0;font-weight:bold;">Reports</div>
<div class="a" style="left:0px;top:585px;width:2200px;height:27.5px;background:#2d2d2f;"></div>
<div class="a" style="left:1px;top:586.3px;width:63.5px;height:24.5px;background:#282828;"></div>
<div class="t" style="left:5.50px;top:588.80px;font-size:15px;letter-spacing:-0.014px;">Account</div>
<div class="a" style="left:68px;top:586.3px;width:31.6px;height:24.5px;background:#282828;"></div>
<div class="t" style="left:72.50px;top:588.80px;font-size:15px;letter-spacing:-0.418px;">File</div>
<div class="a" style="left:103px;top:586.3px;width:187px;height:24.5px;background:#282828;"></div>
<div class="t" style="left:107.50px;top:588.80px;font-size:15px;letter-spacing:-0.023px;">Automatic Strategy Builder</div>
<div class="a" style="left:292px;top:586.3px;width:80px;height:24.5px;background:linear-gradient(#444,#2f2f2f);"></div>
<div class="t" style="left:297.80px;top:588.80px;font-size:15px;letter-spacing:-0.306px;color:#e07a3c;">Backtester</div>
<div class="a" style="left:374px;top:586.3px;width:63px;height:24.5px;background:#282828;"></div>
<div class="t" style="left:378.30px;top:588.80px;font-size:15px;letter-spacing:-0.482px;">Scanner</div>
<div class="a" style="left:440px;top:586.3px;width:145.8px;height:24.5px;background:#282828;"></div>
<div class="t" style="left:444.50px;top:588.80px;font-size:15px;letter-spacing:-0.145px;">Grouped Statements</div>
<div class="a" style="left:589px;top:586.3px;width:140px;height:24.5px;background:#282828;"></div>
<div class="t" style="left:593.70px;top:588.80px;font-size:15px;letter-spacing:-0.082px;">Merged Statements</div>
<div class="a" style="left:0px;top:612.5px;width:2200px;height:33px;background:linear-gradient(to right,#323234,#2a2a2a 50%,#242424);"></div>
<div class="a" style="left:8.3px;top:621.5px;width:2.4px;height:2.4px;background:#a8a8a8;"></div>
<div class="a" style="left:8.3px;top:626.1px;width:2.4px;height:2.4px;background:#a8a8a8;"></div>
<div class="a" style="left:8.3px;top:630.7px;width:2.4px;height:2.4px;background:#a8a8a8;"></div>
<div class="a" style="left:8.3px;top:635.3px;width:2.4px;height:2.4px;background:#a8a8a8;"></div>
<div class="t" style="left:24.50px;top:620.10px;font-size:15px;letter-spacing:-0.923px;">Save</div>
<div class="t" style="left:65.80px;top:620.10px;font-size:15px;letter-spacing:-0.160px;">Delete</div>
<div class="t" style="left:118.50px;top:620.10px;font-size:15px;letter-spacing:-0.038px;">Group</div>
<div class="t" style="left:171.00px;top:620.10px;font-size:15px;letter-spacing:0.016px;">Merge</div>
<div class="a" style="left:223px;top:617px;width:1px;height:23px;background:#3a3a3c;"></div>
<div class="a" style="left:231px;top:621.5px;width:15.5px;height:15.5px;background:#2b2b31;border:1px solid #3b3b42;box-sizing:border-box"></div>
<div class="t" style="left:253.00px;top:620.10px;font-size:15px;letter-spacing:-0.125px;">This account only</div>
<svg class="a" style="left:2164px;top:617px" width="24" height="24" viewBox="0 0 24 24"><path d="M2.5 7.5H20.5V21.5H2.5ZM8.5 7.5V21.5M14.5 7.5V21.5" fill="none" stroke="#cfcfcf" stroke-width="1.6"/><rect x="3" y="1.5" width="4" height="3.5" fill="#cfcfcf"/><path d="M9.5 3.3L11 4.8L13.4 1.8M15.5 3.3L17 4.8L19.4 1.8" fill="none" stroke="#cfcfcf" stroke-width="1.1"/></svg>
<div class="a" style="left:0px;top:645.5px;width:2200px;height:36px;background:linear-gradient(#414141,#333 50%,#2a2a2a);"></div>
<div class="a" style="left:0px;top:645px;width:2200px;height:1px;background:#1c1c1c;"></div>
<div class="t" style="left:5.50px;top:653.80px;font-size:15px;letter-spacing:-0.128px;width:65.30px;overflow:hidden;white-space:nowrap;">Name</div>
<div class="t" style="left:104.50px;top:653.80px;font-size:15px;letter-spacing:-0.211px;width:89.50px;overflow:hidden;white-space:nowrap;">Creation Time</div>
<div class="a" style="left:99px;top:646px;width:1px;height:35px;background:#262626;"></div>
<div class="t" style="left:202.50px;top:653.80px;font-size:15px;letter-spacing:-0.294px;width:65.30px;overflow:hidden;white-space:nowrap;">Currency</div>
<svg class="a" style="left:273px;top:655px" width="17" height="16"><path d="M0.3 1H15.3L10.3 8.3V15H5.3V8.3Z" fill="#8c8c8c"/></svg>
<div class="t" style="left:301.50px;top:653.80px;font-size:15px;letter-spacing:-0.197px;width:65.30px;overflow:hidden;white-space:nowrap;">Net P/L ($)</div>
<svg class="a" style="left:373px;top:655px" width="17" height="16"><path d="M0.3 1H15.3L10.3 8.3V15H5.3V8.3Z" fill="#8c8c8c"/></svg>
<div class="t" style="left:401.50px;top:653.80px;font-size:15px;letter-spacing:-0.469px;width:65.30px;overflow:hidden;white-space:nowrap;">RoMaD</div>
<svg class="a" style="left:473px;top:655px" width="17" height="16"><path d="M0.3 1H15.3L10.3 8.3V15H5.3V8.3Z" fill="#8c8c8c"/></svg>
<div class="t" style="left:501.50px;top:653.80px;font-size:15px;letter-spacing:-0.305px;width:65.30px;overflow:hidden;white-space:nowrap;">Profit Factor</div>
<svg class="a" style="left:573px;top:655px" width="17" height="16"><path d="M0.3 1H15.3L10.3 8.3V15H5.3V8.3Z" fill="#8c8c8c"/></svg>
<div class="t" style="left:601.50px;top:653.80px;font-size:15px;letter-spacing:-0.211px;width:65.30px;overflow:hidden;white-space:nowrap;">Win/Loss</div>
<svg class="a" style="left:673px;top:655px" width="17" height="16"><path d="M0.3 1H15.3L10.3 8.3V15H5.3V8.3Z" fill="#8c8c8c"/></svg>
<div class="t" style="left:701.50px;top:653.80px;font-size:15px;letter-spacing:-0.729px;width:65.30px;overflow:hidden;white-space:nowrap;">Max DD ($)</div>
<svg class="a" style="left:773px;top:655px" width="17" height="16"><path d="M0.3 1H15.3L10.3 8.3V15H5.3V8.3Z" fill="#8c8c8c"/></svg>
<div class="t" style="left:801.50px;top:653.80px;font-size:15px;letter-spacing:-0.137px;width:65.30px;overflow:hidden;white-space:nowrap;">Total</div>
<svg class="a" style="left:873px;top:655px" width="17" height="16"><path d="M0.3 1H15.3L10.3 8.3V15H5.3V8.3Z" fill="#8c8c8c"/></svg>
<div class="t" style="left:901.50px;top:653.80px;font-size:15px;letter-spacing:0.013px;width:65.30px;overflow:hidden;white-space:nowrap;">Profitable</div>
<svg class="a" style="left:973px;top:655px" width="17" height="16"><path d="M0.3 1H15.3L10.3 8.3V15H5.3V8.3Z" fill="#8c8c8c"/></svg>
<div class="t" style="left:1001.50px;top:653.80px;font-size:15px;letter-spacing:-0.284px;width:65.30px;overflow:hidden;white-space:nowrap;">Losing</div>
<svg class="a" style="left:1073px;top:655px" width="17" height="16"><path d="M0.3 1H15.3L10.3 8.3V15H5.3V8.3Z" fill="#8c8c8c"/></svg>
<div class="t" style="left:1101.50px;top:653.80px;font-size:15px;letter-spacing:-0.345px;width:65.30px;overflow:hidden;white-space:nowrap;">Avg Trade</div>
<svg class="a" style="left:1173px;top:655px" width="17" height="16"><path d="M0.3 1H15.3L10.3 8.3V15H5.3V8.3Z" fill="#8c8c8c"/></svg>
<div class="t" style="left:1201.50px;top:653.80px;font-size:15px;letter-spacing:-0.138px;width:65.30px;overflow:hidden;white-space:nowrap;">Avg Win ($)</div>
<svg class="a" style="left:1273px;top:655px" width="17" height="16"><path d="M0.3 1H15.3L10.3 8.3V15H5.3V8.3Z" fill="#8c8c8c"/></svg>
<div class="t" style="left:1301.50px;top:653.80px;font-size:15px;letter-spacing:-0.659px;width:65.30px;overflow:hidden;white-space:nowrap;">Avg Loss ($)</div>
<svg class="a" style="left:1373px;top:655px" width="17" height="16"><path d="M0.3 1H15.3L10.3 8.3V15H5.3V8.3Z" fill="#8c8c8c"/></svg>
<div class="t" style="left:1401.50px;top:653.80px;font-size:15px;letter-spacing:-0.199px;width:65.30px;overflow:hidden;white-space:nowrap;">L Win ($)</div>
<svg class="a" style="left:1473px;top:655px" width="17" height="16"><path d="M0.3 1H15.3L10.3 8.3V15H5.3V8.3Z" fill="#8c8c8c"/></svg>
<div class="t" style="left:1501.50px;top:653.80px;font-size:15px;letter-spacing:-0.514px;width:65.30px;overflow:hidden;white-space:nowrap;">L Loss ($)</div>
<svg class="a" style="left:1573px;top:655px" width="17" height="16"><path d="M0.3 1H15.3L10.3 8.3V15H5.3V8.3Z" fill="#8c8c8c"/></svg>
<div class="t" style="left:1601.50px;top:653.80px;font-size:15px;letter-spacing:-0.334px;width:65.30px;overflow:hidden;white-space:nowrap;">S Win ($)</div>
<svg class="a" style="left:1673px;top:655px" width="17" height="16"><path d="M0.3 1H15.3L10.3 8.3V15H5.3V8.3Z" fill="#8c8c8c"/></svg>
<div class="t" style="left:1701.50px;top:653.80px;font-size:15px;letter-spacing:-0.686px;width:65.30px;overflow:hidden;white-space:nowrap;">S Loss ($)</div>
<svg class="a" style="left:1773px;top:655px" width="17" height="16"><path d="M0.3 1H15.3L10.3 8.3V15H5.3V8.3Z" fill="#8c8c8c"/></svg>
<div class="t" style="left:1801.50px;top:653.80px;font-size:15px;letter-spacing:-0.504px;width:65.30px;overflow:hidden;white-space:nowrap;">Avg SL ($)</div>
<svg class="a" style="left:1873px;top:655px" width="17" height="16"><path d="M0.3 1H15.3L10.3 8.3V15H5.3V8.3Z" fill="#8c8c8c"/></svg>
<div class="t" style="left:1901.50px;top:653.80px;font-size:15px;letter-spacing:-0.542px;width:65.30px;overflow:hidden;white-space:nowrap;">Avg TP ($)</div>
<svg class="a" style="left:1973px;top:655px" width="17" height="16"><path d="M0.3 1H15.3L10.3 8.3V15H5.3V8.3Z" fill="#8c8c8c"/></svg>
<div class="t" style="left:2001.50px;top:653.80px;font-size:15px;letter-spacing:-0.378px;width:65.30px;overflow:hidden;white-space:nowrap;">Max Cons</div>
<svg class="a" style="left:2073px;top:655px" width="17" height="16"><path d="M0.3 1H15.3L10.3 8.3V15H5.3V8.3Z" fill="#8c8c8c"/></svg>
<div class="t" style="left:2101.50px;top:653.80px;font-size:15px;letter-spacing:-0.378px;width:65.30px;overflow:hidden;white-space:nowrap;">Max Cons</div>
<svg class="a" style="left:2173px;top:655px" width="17" height="16"><path d="M0.3 1H15.3L10.3 8.3V15H5.3V8.3Z" fill="#8c8c8c"/></svg>
<div class="a" style="left:0px;top:681px;width:2197px;height:600px;background:linear-gradient(to right,#676767,#8a8a8a);"></div>
<div class="a" style="left:0px;top:1281px;width:2200px;height:7px;background:#222;"></div>
<div class="a" style="left:2197px;top:646px;width:3px;height:640px;background:#222;"></div>
<div class="t" style="left:6.00px;top:686.80px;font-size:15px;letter-spacing:-0.224px;color:#ffffff;font-style:italic;width:88.50px;overflow:hidden;white-space:nowrap;">Moving Avera</div>
<div class="t" style="left:104.50px;top:686.80px;font-size:15px;letter-spacing:-0.019px;color:#ffffff;font-style:italic;width:89.00px;overflow:hidden;white-space:nowrap;">6/9/2024 1:05</div>
<div class="t" style="left:202.50px;top:686.80px;font-size:15px;letter-spacing:-0.200px;color:#ffffff;font-style:italic;width:92.00px;overflow:hidden;white-space:nowrap;">USD</div>
<div class="t" style="left:301.50px;top:686.80px;font-size:15px;letter-spacing:-0.200px;color:#ffffff;font-style:italic;width:92.00px;overflow:hidden;white-space:nowrap;">-133.80</div>
<div class="t" style="left:401.50px;top:686.80px;font-size:15px;letter-spacing:-0.200px;color:#ffffff;font-style:italic;width:92.00px;overflow:hidden;white-space:nowrap;">-0.68</div>
<div class="t" style="left:501.50px;top:686.80px;font-size:15px;letter-spacing:-0.200px;color:#ffffff;font-style:italic;width:92.00px;overflow:hidden;white-space:nowrap;">0.83</div>
<div class="t" style="left:601.50px;top:686.80px;font-size:15px;letter-spacing:-0.200px;color:#ffffff;font-style:italic;width:92.00px;overflow:hidden;white-space:nowrap;">0.56</div>
<div class="t" style="left:701.50px;top:686.80px;font-size:15px;letter-spacing:-0.200px;color:#ffffff;font-style:italic;width:92.00px;overflow:hidden;white-space:nowrap;">-196.60</div>
<div class="t" style="left:801.50px;top:686.80px;font-size:15px;letter-spacing:-0.200px;color:#ffffff;font-style:italic;width:92.00px;overflow:hidden;white-space:nowrap;">267</div>
<div class="t" style="left:901.50px;top:686.80px;font-size:15px;letter-spacing:-0.200px;color:#ffffff;font-style:italic;width:92.00px;overflow:hidden;white-space:nowrap;">95</div>
<div class="t" style="left:1001.50px;top:686.80px;font-size:15px;letter-spacing:-0.200px;color:#ffffff;font-style:italic;width:92.00px;overflow:hidden;white-space:nowrap;">171</div>
<div class="t" style="left:1101.50px;top:686.80px;font-size:15px;letter-spacing:-0.200px;color:#ffffff;font-style:italic;width:92.00px;overflow:hidden;white-space:nowrap;">-0.50</div>
<div class="t" style="left:1201.50px;top:686.80px;font-size:15px;letter-spacing:-0.200px;color:#ffffff;font-style:italic;width:92.00px;overflow:hidden;white-space:nowrap;">6.82</div>
<div class="t" style="left:1301.50px;top:686.80px;font-size:15px;letter-spacing:-0.200px;color:#ffffff;font-style:italic;width:92.00px;overflow:hidden;white-space:nowrap;">-4.57</div>
<div class="t" style="left:1401.50px;top:686.80px;font-size:15px;letter-spacing:-0.200px;color:#ffffff;font-style:italic;width:92.00px;overflow:hidden;white-space:nowrap;">45.90</div>
<div class="t" style="left:1501.50px;top:686.80px;font-size:15px;letter-spacing:-0.200px;color:#ffffff;font-style:italic;width:92.00px;overflow:hidden;white-space:nowrap;">-56.10</div>
<div class="t" style="left:1601.50px;top:686.80px;font-size:15px;letter-spacing:-0.200px;color:#ffffff;font-style:italic;width:92.00px;overflow:hidden;white-space:nowrap;">0.10</div>
<div class="t" style="left:1701.50px;top:686.80px;font-size:15px;letter-spacing:-0.200px;color:#ffffff;font-style:italic;width:92.00px;overflow:hidden;white-space:nowrap;">-0.10</div>
<div class="t" style="left:1801.50px;top:686.80px;font-size:15px;letter-spacing:-0.200px;color:#ffffff;font-style:italic;width:92.00px;overflow:hidden;white-space:nowrap;">0.00</div>
<div class="t" style="left:1901.50px;top:686.80px;font-size:15px;letter-spacing:-0.200px;color:#ffffff;font-style:italic;width:92.00px;overflow:hidden;white-space:nowrap;">0.00</div>
<div class="t" style="left:2001.50px;top:686.80px;font-size:15px;letter-spacing:-0.200px;color:#ffffff;font-style:italic;width:92.00px;overflow:hidden;white-space:nowrap;">40.60</div>
<div class="t" style="left:2101.50px;top:686.80px;font-size:15px;letter-spacing:-0.200px;color:#ffffff;font-style:italic;width:92.00px;overflow:hidden;white-space:nowrap;">-89.90</div>
<div class="t" style="left:6.00px;top:716.80px;font-size:15px;letter-spacing:-0.224px;color:#ffffff;font-style:italic;width:88.50px;overflow:hidden;white-space:nowrap;">Moving Avera</div>
<div class="t" style="left:104.50px;top:716.80px;font-size:15px;letter-spacing:-0.019px;color:#ffffff;font-style:italic;width:89.00px;overflow:hidden;white-space:nowrap;">6/9/2024 1:05</div>
<div class="t" style="left:202.50px;top:716.80px;font-size:15px;letter-spacing:-0.200px;color:#ffffff;font-style:italic;width:92.00px;overflow:hidden;white-space:nowrap;">USD</div>
<div class="t" style="left:301.50px;top:716.80px;font-size:15px;letter-spacing:-0.200px;color:#ffffff;font-style:italic;width:92.00px;overflow:hidden;white-space:nowrap;">-46.40</div>
<div class="t" style="left:401.50px;top:716.80px;font-size:15px;letter-spacing:-0.200px;color:#ffffff;font-style:italic;width:92.00px;overflow:hidden;white-space:nowrap;">-0.30</div>
<div class="t" style="left:501.50px;top:716.80px;font-size:15px;letter-spacing:-0.200px;color:#ffffff;font-style:italic;width:92.00px;overflow:hidden;white-space:nowrap;">0.90</div>
<div class="t" style="left:601.50px;top:716.80px;font-size:15px;letter-spacing:-0.200px;color:#ffffff;font-style:italic;width:92.00px;overflow:hidden;white-space:nowrap;">0.61</div>
<div class="t" style="left:701.50px;top:716.80px;font-size:15px;letter-spacing:-0.200px;color:#ffffff;font-style:italic;width:92.00px;overflow:hidden;white-space:nowrap;">-148.80</div>
<div class="t" style="left:801.50px;top:716.80px;font-size:15px;letter-spacing:-0.200px;color:#ffffff;font-style:italic;width:92.00px;overflow:hidden;white-space:nowrap;">79</div>
<div class="t" style="left:901.50px;top:716.80px;font-size:15px;letter-spacing:-0.200px;color:#ffffff;font-style:italic;width:92.00px;overflow:hidden;white-space:nowrap;">30</div>
<div class="t" style="left:1001.50px;top:716.80px;font-size:15px;letter-spacing:-0.200px;color:#ffffff;font-style:italic;width:92.00px;overflow:hidden;white-space:nowrap;">49</div>
<div class="t" style="left:1101.50px;top:716.80px;font-size:15px;letter-spacing:-0.200px;color:#ffffff;font-style:italic;width:92.00px;overflow:hidden;white-space:nowrap;">-0.59</div>
<div class="t" style="left:1201.50px;top:716.80px;font-size:15px;letter-spacing:-0.200px;color:#ffffff;font-style:italic;width:92.00px;overflow:hidden;white-space:nowrap;">13.68</div>
<div class="t" style="left:1301.50px;top:716.80px;font-size:15px;letter-spacing:-0.200px;color:#ffffff;font-style:italic;width:92.00px;overflow:hidden;white-space:nowrap;">-9.32</div>
<div class="t" style="left:1401.50px;top:716.80px;font-size:15px;letter-spacing:-0.200px;color:#ffffff;font-style:italic;width:92.00px;overflow:hidden;white-space:nowrap;">60.00</div>
<div class="t" style="left:1501.50px;top:716.80px;font-size:15px;letter-spacing:-0.200px;color:#ffffff;font-style:italic;width:92.00px;overflow:hidden;white-space:nowrap;">-60.80</div>
<div class="t" style="left:1601.50px;top:716.80px;font-size:15px;letter-spacing:-0.200px;color:#ffffff;font-style:italic;width:92.00px;overflow:hidden;white-space:nowrap;">0.20</div>
<div class="t" style="left:1701.50px;top:716.80px;font-size:15px;letter-spacing:-0.200px;color:#ffffff;font-style:italic;width:92.00px;overflow:hidden;white-space:nowrap;">-0.30</div>
<div class="t" style="left:1801.50px;top:716.80px;font-size:15px;letter-spacing:-0.200px;color:#ffffff;font-style:italic;width:92.00px;overflow:hidden;white-space:nowrap;">0.00</div>
<div class="t" style="left:1901.50px;top:716.80px;font-size:15px;letter-spacing:-0.200px;color:#ffffff;font-style:italic;width:92.00px;overflow:hidden;white-space:nowrap;">0.00</div>
<div class="t" style="left:2001.50px;top:716.80px;font-size:15px;letter-spacing:-0.200px;color:#ffffff;font-style:italic;width:92.00px;overflow:hidden;white-space:nowrap;">107.20</div>
<div class="t" style="left:2101.50px;top:716.80px;font-size:15px;letter-spacing:-0.200px;color:#ffffff;font-style:italic;width:92.00px;overflow:hidden;white-space:nowrap;">-88.30</div>
<div class="t" style="left:6.00px;top:746.80px;font-size:15px;letter-spacing:-0.224px;color:#ffffff;font-style:italic;width:88.50px;overflow:hidden;white-space:nowrap;">Moving Avera</div>
<div class="t" style="left:104.50px;top:746.80px;font-size:15px;letter-spacing:-0.019px;color:#ffffff;font-style:italic;width:89.00px;overflow:hidden;white-space:nowrap;">6/9/2024 1:05</div>
<div class="t" style="left:202.50px;top:746.80px;font-size:15px;letter-spacing:-0.200px;color:#ffffff;font-style:italic;width:92.00px;overflow:hidden;white-space:nowrap;">USD</div>
<div class="t" style="left:301.50px;top:746.80px;font-size:15px;letter-spacing:-0.200px;color:#ffffff;font-style:italic;width:92.00px;overflow:hidden;white-space:nowrap;">198.60</div>
<div class="t" style="left:401.50px;top:746.80px;font-size:15px;letter-spacing:-0.200px;color:#ffffff;font-style:italic;width:92.00px;overflow:hidden;white-space:nowrap;">3.71</div>
<div class="t" style="left:501.50px;top:746.80px;font-size:15px;letter-spacing:-0.200px;color:#ffffff;font-style:italic;width:92.00px;overflow:hidden;white-space:nowrap;">2.50</div>
<div class="t" style="left:601.50px;top:746.80px;font-size:15px;letter-spacing:-0.200px;color:#ffffff;font-style:italic;width:92.00px;overflow:hidden;white-space:nowrap;">0.84</div>
<div class="t" style="left:701.50px;top:746.80px;font-size:15px;letter-spacing:-0.200px;color:#ffffff;font-style:italic;width:92.00px;overflow:hidden;white-space:nowrap;">-54.30</div>
<div class="t" style="left:801.50px;top:746.80px;font-size:15px;letter-spacing:-0.200px;color:#ffffff;font-style:italic;width:92.00px;overflow:hidden;white-space:nowrap;">35</div>
<div class="t" style="left:901.50px;top:746.80px;font-size:15px;letter-spacing:-0.200px;color:#ffffff;font-style:italic;width:92.00px;overflow:hidden;white-space:nowrap;">25</div>
<div class="t" style="left:1001.50px;top:746.80px;font-size:15px;letter-spacing:-0.200px;color:#ffffff;font-style:italic;width:92.00px;overflow:hidden;white-space:nowrap;">10</div>
<div class="t" style="left:1101.50px;top:746.80px;font-size:15px;letter-spacing:-0.200px;color:#ffffff;font-style:italic;width:92.00px;overflow:hidden;white-space:nowrap;">5.67</div>
<div class="t" style="left:1201.50px;top:746.80px;font-size:15px;letter-spacing:-0.200px;color:#ffffff;font-style:italic;width:92.00px;overflow:hidden;white-space:nowrap;">11.92</div>
<div class="t" style="left:1301.50px;top:746.80px;font-size:15px;letter-spacing:-0.200px;color:#ffffff;font-style:italic;width:92.00px;overflow:hidden;white-space:nowrap;">-7.95</div>
<div class="t" style="left:1401.50px;top:746.80px;font-size:15px;letter-spacing:-0.200px;color:#ffffff;font-style:italic;width:92.00px;overflow:hidden;white-space:nowrap;">88.70</div>
<div class="t" style="left:1501.50px;top:746.80px;font-size:15px;letter-spacing:-0.200px;color:#ffffff;font-style:italic;width:92.00px;overflow:hidden;white-space:nowrap;">-23.90</div>
<div class="t" style="left:1601.50px;top:746.80px;font-size:15px;letter-spacing:-0.200px;color:#ffffff;font-style:italic;width:92.00px;overflow:hidden;white-space:nowrap;">0.30</div>
<div class="t" style="left:1701.50px;top:746.80px;font-size:15px;letter-spacing:-0.200px;color:#ffffff;font-style:italic;width:92.00px;overflow:hidden;white-space:nowrap;">-0.20</div>
<div class="t" style="left:1801.50px;top:746.80px;font-size:15px;letter-spacing:-0.200px;color:#ffffff;font-style:italic;width:92.00px;overflow:hidden;white-space:nowrap;">0.00</div>
<div class="t" style="left:1901.50px;top:746.80px;font-size:15px;letter-spacing:-0.200px;color:#ffffff;font-style:italic;width:92.00px;overflow:hidden;white-space:nowrap;">0.00</div>
<div class="t" style="left:2001.50px;top:746.80px;font-size:15px;letter-spacing:-0.200px;color:#ffffff;font-style:italic;width:92.00px;overflow:hidden;white-space:nowrap;">124.80</div>
<div class="t" style="left:2101.50px;top:746.80px;font-size:15px;letter-spacing:-0.200px;color:#ffffff;font-style:italic;width:92.00px;overflow:hidden;white-space:nowrap;">-54.30</div>
<div class="t" style="left:6.00px;top:776.80px;font-size:15px;letter-spacing:-0.224px;color:#ffffff;font-style:italic;width:88.50px;overflow:hidden;white-space:nowrap;">Moving Avera</div>
<div class="t" style="left:104.50px;top:776.80px;font-size:15px;letter-spacing:-0.019px;color:#ffffff;font-style:italic;width:89.00px;overflow:hidden;white-space:nowrap;">6/9/2024 1:05</div>
<div class="t" style="left:202.50px;top:776.80px;font-size:15px;letter-spacing:-0.200px;color:#ffffff;font-style:italic;width:92.00px;overflow:hidden;white-space:nowrap;">USD</div>
<div class="t" style="left:301.50px;top:776.80px;font-size:15px;letter-spacing:-0.200px;color:#ffffff;font-style:italic;width:92.00px;overflow:hidden;white-space:nowrap;">-318.30</div>
<div class="t" style="left:401.50px;top:776.80px;font-size:15px;letter-spacing:-0.200px;color:#ffffff;font-style:italic;width:92.00px;overflow:hidden;white-space:nowrap;">-0.91</div>
<div class="t" style="left:501.50px;top:776.80px;font-size:15px;letter-spacing:-0.200px;color:#ffffff;font-style:italic;width:92.00px;overflow:hidden;white-space:nowrap;">0.23</div>
<div class="t" style="left:601.50px;top:776.80px;font-size:15px;letter-spacing:-0.200px;color:#ffffff;font-style:italic;width:92.00px;overflow:hidden;white-space:nowrap;">0.15</div>
<div class="t" style="left:701.50px;top:776.80px;font-size:15px;letter-spacing:-0.200px;color:#ffffff;font-style:italic;width:92.00px;overflow:hidden;white-space:nowrap;">-345.20</div>
<div class="t" style="left:801.50px;top:776.80px;font-size:15px;letter-spacing:-0.200px;color:#ffffff;font-style:italic;width:92.00px;overflow:hidden;white-space:nowrap;">23</div>
<div class="t" style="left:901.50px;top:776.80px;font-size:15px;letter-spacing:-0.200px;color:#ffffff;font-style:italic;width:92.00px;overflow:hidden;white-space:nowrap;">5</div>
<div class="t" style="left:1001.50px;top:776.80px;font-size:15px;letter-spacing:-0.200px;color:#ffffff;font-style:italic;width:92.00px;overflow:hidden;white-space:nowrap;">18</div>
<div class="t" style="left:1101.50px;top:776.80px;font-size:15px;letter-spacing:-0.200px;color:#ffffff;font-style:italic;width:92.00px;overflow:hidden;white-space:nowrap;">-13.84</div>
<div class="t" style="left:1201.50px;top:776.80px;font-size:15px;letter-spacing:-0.200px;color:#ffffff;font-style:italic;width:92.00px;overflow:hidden;white-space:nowrap;">19.30</div>
<div class="t" style="left:1301.50px;top:776.80px;font-size:15px;letter-spacing:-0.200px;color:#ffffff;font-style:italic;width:92.00px;overflow:hidden;white-space:nowrap;">-10.76</div>
<div class="t" style="left:1401.50px;top:776.80px;font-size:15px;letter-spacing:-0.200px;color:#ffffff;font-style:italic;width:92.00px;overflow:hidden;white-space:nowrap;">42.90</div>
<div class="t" style="left:1501.50px;top:776.80px;font-size:15px;letter-spacing:-0.200px;color:#ffffff;font-style:italic;width:92.00px;overflow:hidden;white-space:nowrap;">-61.90</div>
<div class="t" style="left:1601.50px;top:776.80px;font-size:15px;letter-spacing:-0.200px;color:#ffffff;font-style:italic;width:92.00px;overflow:hidden;white-space:nowrap;">21.10</div>
<div class="t" style="left:1701.50px;top:776.80px;font-size:15px;letter-spacing:-0.200px;color:#ffffff;font-style:italic;width:92.00px;overflow:hidden;white-space:nowrap;">-0.10</div>
<div class="t" style="left:1801.50px;top:776.80px;font-size:15px;letter-spacing:-0.200px;color:#ffffff;font-style:italic;width:92.00px;overflow:hidden;white-space:nowrap;">0.00</div>
<div class="t" style="left:1901.50px;top:776.80px;font-size:15px;letter-spacing:-0.200px;color:#ffffff;font-style:italic;width:92.00px;overflow:hidden;white-space:nowrap;">0.00</div>
<div class="t" style="left:2001.50px;top:776.80px;font-size:15px;letter-spacing:-0.200px;color:#ffffff;font-style:italic;width:92.00px;overflow:hidden;white-space:nowrap;">64.00</div>
<div class="t" style="left:2101.50px;top:776.80px;font-size:15px;letter-spacing:-0.200px;color:#ffffff;font-style:italic;width:92.00px;overflow:hidden;white-space:nowrap;">-277.30</div>
<div class="t" style="left:6.00px;top:806.80px;font-size:15px;letter-spacing:-0.224px;color:#ffffff;font-style:italic;width:88.50px;overflow:hidden;white-space:nowrap;">Moving Avera</div>
<div class="t" style="left:104.50px;top:806.80px;font-size:15px;letter-spacing:-0.019px;color:#ffffff;font-style:italic;width:89.00px;overflow:hidden;white-space:nowrap;">6/9/2024 1:05</div>
<div class="t" style="left:202.50px;top:806.80px;font-size:15px;letter-spacing:-0.200px;color:#ffffff;font-style:italic;width:92.00px;overflow:hidden;white-space:nowrap;">USD</div>
<div class="t" style="left:301.50px;top:806.80px;font-size:15px;letter-spacing:-0.200px;color:#ffffff;font-style:italic;width:92.00px;overflow:hidden;white-space:nowrap;">-185.20</div>
<div class="t" style="left:401.50px;top:806.80px;font-size:15px;letter-spacing:-0.200px;color:#ffffff;font-style:italic;width:92.00px;overflow:hidden;white-space:nowrap;">-1.00</div>
<div class="t" style="left:501.50px;top:806.80px;font-size:15px;letter-spacing:-0.200px;color:#ffffff;font-style:italic;width:92.00px;overflow:hidden;white-space:nowrap;">0.13</div>
<div class="t" style="left:601.50px;top:806.80px;font-size:15px;letter-spacing:-0.200px;color:#ffffff;font-style:italic;width:92.00px;overflow:hidden;white-space:nowrap;">0.40</div>
<div class="t" style="left:701.50px;top:806.80px;font-size:15px;letter-spacing:-0.200px;color:#ffffff;font-style:italic;width:92.00px;overflow:hidden;white-space:nowrap;">-194.50</div>
<div class="t" style="left:801.50px;top:806.80px;font-size:15px;letter-spacing:-0.200px;color:#ffffff;font-style:italic;width:92.00px;overflow:hidden;white-space:nowrap;">7</div>
<div class="t" style="left:901.50px;top:806.80px;font-size:15px;letter-spacing:-0.200px;color:#ffffff;font-style:italic;width:92.00px;overflow:hidden;white-space:nowrap;">2</div>
<div class="t" style="left:1001.50px;top:806.80px;font-size:15px;letter-spacing:-0.200px;color:#ffffff;font-style:italic;width:92.00px;overflow:hidden;white-space:nowrap;">5</div>
<div class="t" style="left:1101.50px;top:806.80px;font-size:15px;letter-spacing:-0.200px;color:#ffffff;font-style:italic;width:92.00px;overflow:hidden;white-space:nowrap;">-26.46</div>
<div class="t" style="left:1201.50px;top:806.80px;font-size:15px;letter-spacing:-0.200px;color:#ffffff;font-style:italic;width:92.00px;overflow:hidden;white-space:nowrap;">13.90</div>
<div class="t" style="left:1301.50px;top:806.80px;font-size:15px;letter-spacing:-0.200px;color:#ffffff;font-style:italic;width:92.00px;overflow:hidden;white-space:nowrap;">-12.74</div>
<div class="t" style="left:1401.50px;top:806.80px;font-size:15px;letter-spacing:-0.200px;color:#ffffff;font-style:italic;width:92.00px;overflow:hidden;white-space:nowrap;">19.20</div>
<div class="t" style="left:1501.50px;top:806.80px;font-size:15px;letter-spacing:-0.200px;color:#ffffff;font-style:italic;width:92.00px;overflow:hidden;white-space:nowrap;">-92.60</div>
<div class="t" style="left:1601.50px;top:806.80px;font-size:15px;letter-spacing:-0.200px;color:#ffffff;font-style:italic;width:92.00px;overflow:hidden;white-space:nowrap;">9.30</div>
<div class="t" style="left:1701.50px;top:806.80px;font-size:15px;letter-spacing:-0.200px;color:#ffffff;font-style:italic;width:92.00px;overflow:hidden;white-space:nowrap;">-0.10</div>
<div class="t" style="left:1801.50px;top:806.80px;font-size:15px;letter-spacing:-0.200px;color:#ffffff;font-style:italic;width:92.00px;overflow:hidden;white-space:nowrap;">0.00</div>
<div class="t" style="left:1901.50px;top:806.80px;font-size:15px;letter-spacing:-0.200px;color:#ffffff;font-style:italic;width:92.00px;overflow:hidden;white-space:nowrap;">0.00</div>
<div class="t" style="left:2001.50px;top:806.80px;font-size:15px;letter-spacing:-0.200px;color:#ffffff;font-style:italic;width:92.00px;overflow:hidden;white-space:nowrap;">0.00</div>
<div class="t" style="left:2101.50px;top:806.80px;font-size:15px;letter-spacing:-0.200px;color:#ffffff;font-style:italic;width:92.00px;overflow:hidden;white-space:nowrap;">-95.80</div>
<div class="t" style="left:6.00px;top:836.80px;font-size:15px;letter-spacing:-0.224px;color:#ffffff;font-style:italic;width:88.50px;overflow:hidden;white-space:nowrap;">Moving Avera</div>
<div class="t" style="left:104.50px;top:836.80px;font-size:15px;letter-spacing:-0.019px;color:#ffffff;font-style:italic;width:89.00px;overflow:hidden;white-space:nowrap;">6/9/2024 1:05</div>
<div class="t" style="left:202.50px;top:836.80px;font-size:15px;letter-spacing:-0.200px;color:#ffffff;font-style:italic;width:92.00px;overflow:hidden;white-space:nowrap;">USD</div>
<div class="t" style="left:301.50px;top:836.80px;font-size:15px;letter-spacing:-0.200px;color:#ffffff;font-style:italic;width:92.00px;overflow:hidden;white-space:nowrap;">-55.70</div>
<div class="t" style="left:401.50px;top:836.80px;font-size:15px;letter-spacing:-0.200px;color:#ffffff;font-style:italic;width:92.00px;overflow:hidden;white-space:nowrap;">-0.28</div>
<div class="t" style="left:501.50px;top:836.80px;font-size:15px;letter-spacing:-0.200px;color:#ffffff;font-style:italic;width:92.00px;overflow:hidden;white-space:nowrap;">0.94</div>
<div class="t" style="left:601.50px;top:836.80px;font-size:15px;letter-spacing:-0.200px;color:#ffffff;font-style:italic;width:92.00px;overflow:hidden;white-space:nowrap;">0.52</div>
<div class="t" style="left:701.50px;top:836.80px;font-size:15px;letter-spacing:-0.200px;color:#ffffff;font-style:italic;width:92.00px;overflow:hidden;white-space:nowrap;">-200.40</div>
<div class="t" style="left:801.50px;top:836.80px;font-size:15px;letter-spacing:-0.200px;color:#ffffff;font-style:italic;width:92.00px;overflow:hidden;white-space:nowrap;">267</div>
<div class="t" style="left:901.50px;top:836.80px;font-size:15px;letter-spacing:-0.200px;color:#ffffff;font-style:italic;width:92.00px;overflow:hidden;white-space:nowrap;">92</div>
<div class="t" style="left:1001.50px;top:836.80px;font-size:15px;letter-spacing:-0.200px;color:#ffffff;font-style:italic;width:92.00px;overflow:hidden;white-space:nowrap;">175</div>
<div class="t" style="left:1101.50px;top:836.80px;font-size:15px;letter-spacing:-0.200px;color:#ffffff;font-style:italic;width:92.00px;overflow:hidden;white-space:nowrap;">-0.21</div>
<div class="t" style="left:1201.50px;top:836.80px;font-size:15px;letter-spacing:-0.200px;color:#ffffff;font-style:italic;width:92.00px;overflow:hidden;white-space:nowrap;">9.52</div>
<div class="t" style="left:1301.50px;top:836.80px;font-size:15px;letter-spacing:-0.200px;color:#ffffff;font-style:italic;width:92.00px;overflow:hidden;white-space:nowrap;">-6.92</div>
<div class="t" style="left:1401.50px;top:836.80px;font-size:15px;letter-spacing:-0.200px;color:#ffffff;font-style:italic;width:92.00px;overflow:hidden;white-space:nowrap;">78.50</div>
<div class="t" style="left:1501.50px;top:836.80px;font-size:15px;letter-spacing:-0.200px;color:#ffffff;font-style:italic;width:92.00px;overflow:hidden;white-space:nowrap;">-60.90</div>
<div class="t" style="left:1601.50px;top:836.80px;font-size:15px;letter-spacing:-0.200px;color:#ffffff;font-style:italic;width:92.00px;overflow:hidden;white-space:nowrap;">0.10</div>
<div class="t" style="left:1701.50px;top:836.80px;font-size:15px;letter-spacing:-0.200px;color:#ffffff;font-style:italic;width:92.00px;overflow:hidden;white-space:nowrap;">-0.10</div>
<div class="t" style="left:1801.50px;top:836.80px;font-size:15px;letter-spacing:-0.200px;color:#ffffff;font-style:italic;width:92.00px;overflow:hidden;white-space:nowrap;">0.00</div>
<div class="t" style="left:1901.50px;top:836.80px;font-size:15px;letter-spacing:-0.200px;color:#ffffff;font-style:italic;width:92.00px;overflow:hidden;white-space:nowrap;">0.00</div>
<div class="t" style="left:2001.50px;top:836.80px;font-size:15px;letter-spacing:-0.200px;color:#ffffff;font-style:italic;width:92.00px;overflow:hidden;white-space:nowrap;">114.10</div>
<div class="t" style="left:2101.50px;top:836.80px;font-size:15px;letter-spacing:-0.200px;color:#ffffff;font-style:italic;width:92.00px;overflow:hidden;white-space:nowrap;">-103.20</div>
<div class="t" style="left:6.00px;top:866.80px;font-size:15px;letter-spacing:-0.224px;color:#ffffff;font-style:italic;width:88.50px;overflow:hidden;white-space:nowrap;">Moving Avera</div>
<div class="t" style="left:104.50px;top:866.80px;font-size:15px;letter-spacing:-0.019px;color:#ffffff;font-style:italic;width:89.00px;overflow:hidden;white-space:nowrap;">6/9/2024 1:05</div>
<div class="t" style="left:202.50px;top:866.80px;font-size:15px;letter-spacing:-0.200px;color:#ffffff;font-style:italic;width:92.00px;overflow:hidden;white-space:nowrap;">USD</div>
<div class="t" style="left:301.50px;top:866.80px;font-size:15px;letter-spacing:-0.200px;color:#ffffff;font-style:italic;width:92.00px;overflow:hidden;white-space:nowrap;">-21.60</div>
<div class="t" style="left:401.50px;top:866.80px;font-size:15px;letter-spacing:-0.200px;color:#ffffff;font-style:italic;width:92.00px;overflow:hidden;white-space:nowrap;">-0.08</div>
<div class="t" style="left:501.50px;top:866.80px;font-size:15px;letter-spacing:-0.200px;color:#ffffff;font-style:italic;width:92.00px;overflow:hidden;white-space:nowrap;">0.96</div>
<div class="t" style="left:601.50px;top:866.80px;font-size:15px;letter-spacing:-0.200px;color:#ffffff;font-style:italic;width:92.00px;overflow:hidden;white-space:nowrap;">0.50</div>
<div class="t" style="left:701.50px;top:866.80px;font-size:15px;letter-spacing:-0.200px;color:#ffffff;font-style:italic;width:92.00px;overflow:hidden;white-space:nowrap;">-256.90</div>
<div class="t" style="left:801.50px;top:866.80px;font-size:15px;letter-spacing:-0.200px;color:#ffffff;font-style:italic;width:92.00px;overflow:hidden;white-space:nowrap;">87</div>
<div class="t" style="left:901.50px;top:866.80px;font-size:15px;letter-spacing:-0.200px;color:#ffffff;font-style:italic;width:92.00px;overflow:hidden;white-space:nowrap;">29</div>
<div class="t" style="left:1001.50px;top:866.80px;font-size:15px;letter-spacing:-0.200px;color:#ffffff;font-style:italic;width:92.00px;overflow:hidden;white-space:nowrap;">58</div>
<div class="t" style="left:1101.50px;top:866.80px;font-size:15px;letter-spacing:-0.200px;color:#ffffff;font-style:italic;width:92.00px;overflow:hidden;white-space:nowrap;">-0.25</div>
<div class="t" style="left:1201.50px;top:866.80px;font-size:15px;letter-spacing:-0.200px;color:#ffffff;font-style:italic;width:92.00px;overflow:hidden;white-space:nowrap;">18.20</div>
<div class="t" style="left:1301.50px;top:866.80px;font-size:15px;letter-spacing:-0.200px;color:#ffffff;font-style:italic;width:92.00px;overflow:hidden;white-space:nowrap;">-5.33</div>
<div class="t" style="left:1401.50px;top:866.80px;font-size:15px;letter-spacing:-0.200px;color:#ffffff;font-style:italic;width:92.00px;overflow:hidden;white-space:nowrap;">84.90</div>
<div class="t" style="left:1501.50px;top:866.80px;font-size:15px;letter-spacing:-0.200px;color:#ffffff;font-style:italic;width:92.00px;overflow:hidden;white-space:nowrap;">-64.20</div>
<div class="t" style="left:1601.50px;top:866.80px;font-size:15px;letter-spacing:-0.200px;color:#ffffff;font-style:italic;width:92.00px;overflow:hidden;white-space:nowrap;">0.10</div>
<div class="t" style="left:1701.50px;top:866.80px;font-size:15px;letter-spacing:-0.200px;color:#ffffff;font-style:italic;width:92.00px;overflow:hidden;white-space:nowrap;">-0.10</div>
<div class="t" style="left:1801.50px;top:866.80px;font-size:15px;letter-spacing:-0.200px;color:#ffffff;font-style:italic;width:92.00px;overflow:hidden;white-space:nowrap;">0.00</div>
<div class="t" style="left:1901.50px;top:866.80px;font-size:15px;letter-spacing:-0.200px;color:#ffffff;font-style:italic;width:92.00px;overflow:hidden;white-space:nowrap;">0.00</div>
<div class="t" style="left:2001.50px;top:866.80px;font-size:15px;letter-spacing:-0.200px;color:#ffffff;font-style:italic;width:92.00px;overflow:hidden;white-space:nowrap;">102.30</div>
<div class="t" style="left:2101.50px;top:866.80px;font-size:15px;letter-spacing:-0.200px;color:#ffffff;font-style:italic;width:92.00px;overflow:hidden;white-space:nowrap;">-197.70</div>
<div class="t" style="left:6.00px;top:896.80px;font-size:15px;letter-spacing:-0.224px;color:#ffffff;font-style:italic;width:88.50px;overflow:hidden;white-space:nowrap;">Moving Avera</div>
<div class="t" style="left:104.50px;top:896.80px;font-size:15px;letter-spacing:-0.019px;color:#ffffff;font-style:italic;width:89.00px;overflow:hidden;white-space:nowrap;">6/9/2024 1:05</div>
<div class="t" style="left:202.50px;top:896.80px;font-size:15px;letter-spacing:-0.200px;color:#ffffff;font-style:italic;width:92.00px;overflow:hidden;white-space:nowrap;">USD</div>
<div class="t" style="left:301.50px;top:896.80px;font-size:15px;letter-spacing:-0.200px;color:#ffffff;font-style:italic;width:92.00px;overflow:hidden;white-space:nowrap;">-180.70</div>
<div class="t" style="left:401.50px;top:896.80px;font-size:15px;letter-spacing:-0.200px;color:#ffffff;font-style:italic;width:92.00px;overflow:hidden;white-space:nowrap;">-0.83</div>
<div class="t" style="left:501.50px;top:896.80px;font-size:15px;letter-spacing:-0.200px;color:#ffffff;font-style:italic;width:92.00px;overflow:hidden;white-space:nowrap;">0.58</div>
<div class="t" style="left:601.50px;top:896.80px;font-size:15px;letter-spacing:-0.200px;color:#ffffff;font-style:italic;width:92.00px;overflow:hidden;white-space:nowrap;">0.55</div>
<div class="t" style="left:701.50px;top:896.80px;font-size:15px;letter-spacing:-0.200px;color:#ffffff;font-style:italic;width:92.00px;overflow:hidden;white-space:nowrap;">-219.20</div>
<div class="t" style="left:801.50px;top:896.80px;font-size:15px;letter-spacing:-0.200px;color:#ffffff;font-style:italic;width:92.00px;overflow:hidden;white-space:nowrap;">51</div>
<div class="t" style="left:901.50px;top:896.80px;font-size:15px;letter-spacing:-0.200px;color:#ffffff;font-style:italic;width:92.00px;overflow:hidden;white-space:nowrap;">18</div>
<div class="t" style="left:1001.50px;top:896.80px;font-size:15px;letter-spacing:-0.200px;color:#ffffff;font-style:italic;width:92.00px;overflow:hidden;white-space:nowrap;">33</div>
<div class="t" style="left:1101.50px;top:896.80px;font-size:15px;letter-spacing:-0.200px;color:#ffffff;font-style:italic;width:92.00px;overflow:hidden;white-space:nowrap;">-3.54</div>
<div class="t" style="left:1201.50px;top:896.80px;font-size:15px;letter-spacing:-0.200px;color:#ffffff;font-style:italic;width:92.00px;overflow:hidden;white-space:nowrap;">13.90</div>
<div class="t" style="left:1301.50px;top:896.80px;font-size:15px;letter-spacing:-0.200px;color:#ffffff;font-style:italic;width:92.00px;overflow:hidden;white-space:nowrap;">-12.99</div>
<div class="t" style="left:1401.50px;top:896.80px;font-size:15px;letter-spacing:-0.200px;color:#ffffff;font-style:italic;width:92.00px;overflow:hidden;white-space:nowrap;">32.30</div>
<div class="t" style="left:1501.50px;top:896.80px;font-size:15px;letter-spacing:-0.200px;color:#ffffff;font-style:italic;width:92.00px;overflow:hidden;white-space:nowrap;">-62.60</div>
<div class="t" style="left:1601.50px;top:896.80px;font-size:15px;letter-spacing:-0.200px;color:#ffffff;font-style:italic;width:92.00px;overflow:hidden;white-space:nowrap;">0.30</div>
<div class="t" style="left:1701.50px;top:896.80px;font-size:15px;letter-spacing:-0.200px;color:#ffffff;font-style:italic;width:92.00px;overflow:hidden;white-space:nowrap;">-0.10</div>
<div class="t" style="left:1801.50px;top:896.80px;font-size:15px;letter-spacing:-0.200px;color:#ffffff;font-style:italic;width:92.00px;overflow:hidden;white-space:nowrap;">0.00</div>
<div class="t" style="left:1901.50px;top:896.80px;font-size:15px;letter-spacing:-0.200px;color:#ffffff;font-style:italic;width:92.00px;overflow:hidden;white-space:nowrap;">0.00</div>
<div class="t" style="left:2001.50px;top:896.80px;font-size:15px;letter-spacing:-0.200px;color:#ffffff;font-style:italic;width:92.00px;overflow:hidden;white-space:nowrap;">52.10</div>
<div class="t" style="left:2101.50px;top:896.80px;font-size:15px;letter-spacing:-0.200px;color:#ffffff;font-style:italic;width:92.00px;overflow:hidden;white-space:nowrap;">-94.70</div>
<div class="t" style="left:6.00px;top:926.80px;font-size:15px;letter-spacing:-0.224px;color:#ffffff;font-style:italic;width:88.50px;overflow:hidden;white-space:nowrap;">Moving Avera</div>
<div class="t" style="left:104.50px;top:926.80px;font-size:15px;letter-spacing:-0.019px;color:#ffffff;font-style:italic;width:89.00px;overflow:hidden;white-space:nowrap;">6/9/2024 1:05</div>
<div class="t" style="left:202.50px;top:926.80px;font-size:15px;letter-spacing:-0.200px;color:#ffffff;font-style:italic;width:92.00px;overflow:hidden;white-space:nowrap;">USD</div>
<div class="t" style="left:301.50px;top:926.80px;font-size:15px;letter-spacing:-0.200px;color:#ffffff;font-style:italic;width:92.00px;overflow:hidden;white-space:nowrap;">-395.40</div>
<div class="t" style="left:401.50px;top:926.80px;font-size:15px;letter-spacing:-0.200px;color:#ffffff;font-style:italic;width:92.00px;overflow:hidden;white-space:nowrap;">-0.96</div>
<div class="t" style="left:501.50px;top:926.80px;font-size:15px;letter-spacing:-0.200px;color:#ffffff;font-style:italic;width:92.00px;overflow:hidden;white-space:nowrap;">0.19</div>
<div class="t" style="left:601.50px;top:926.80px;font-size:15px;letter-spacing:-0.200px;color:#ffffff;font-style:italic;width:92.00px;overflow:hidden;white-space:nowrap;">0.14</div>
<div class="t" style="left:701.50px;top:926.80px;font-size:15px;letter-spacing:-0.200px;color:#ffffff;font-style:italic;width:92.00px;overflow:hidden;white-space:nowrap;">-403.50</div>
<div class="t" style="left:801.50px;top:926.80px;font-size:15px;letter-spacing:-0.200px;color:#ffffff;font-style:italic;width:92.00px;overflow:hidden;white-space:nowrap;">25</div>
<div class="t" style="left:901.50px;top:926.80px;font-size:15px;letter-spacing:-0.200px;color:#ffffff;font-style:italic;width:92.00px;overflow:hidden;white-space:nowrap;">3</div>
<div class="t" style="left:1001.50px;top:926.80px;font-size:15px;letter-spacing:-0.200px;color:#ffffff;font-style:italic;width:92.00px;overflow:hidden;white-space:nowrap;">22</div>
<div class="t" style="left:1101.50px;top:926.80px;font-size:15px;letter-spacing:-0.200px;color:#ffffff;font-style:italic;width:92.00px;overflow:hidden;white-space:nowrap;">-15.82</div>
<div class="t" style="left:1201.50px;top:926.80px;font-size:15px;letter-spacing:-0.200px;color:#ffffff;font-style:italic;width:92.00px;overflow:hidden;white-space:nowrap;">30.50</div>
<div class="t" style="left:1301.50px;top:926.80px;font-size:15px;letter-spacing:-0.200px;color:#ffffff;font-style:italic;width:92.00px;overflow:hidden;white-space:nowrap;">-22.14</div>
<div class="t" style="left:1401.50px;top:926.80px;font-size:15px;letter-spacing:-0.200px;color:#ffffff;font-style:italic;width:92.00px;overflow:hidden;white-space:nowrap;">40.80</div>
<div class="t" style="left:1501.50px;top:926.80px;font-size:15px;letter-spacing:-0.200px;color:#ffffff;font-style:italic;width:92.00px;overflow:hidden;white-space:nowrap;">-82.40</div>
<div class="t" style="left:1601.50px;top:926.80px;font-size:15px;letter-spacing:-0.200px;color:#ffffff;font-style:italic;width:92.00px;overflow:hidden;white-space:nowrap;">16.70</div>
<div class="t" style="left:1701.50px;top:926.80px;font-size:15px;letter-spacing:-0.200px;color:#ffffff;font-style:italic;width:92.00px;overflow:hidden;white-space:nowrap;">-3.30</div>
<div class="t" style="left:1801.50px;top:926.80px;font-size:15px;letter-spacing:-0.200px;color:#ffffff;font-style:italic;width:92.00px;overflow:hidden;white-space:nowrap;">0.00</div>
<div class="t" style="left:1901.50px;top:926.80px;font-size:15px;letter-spacing:-0.200px;color:#ffffff;font-style:italic;width:92.00px;overflow:hidden;white-space:nowrap;">0.00</div>
<div class="t" style="left:2001.50px;top:926.80px;font-size:15px;letter-spacing:-0.200px;color:#ffffff;font-style:italic;width:92.00px;overflow:hidden;white-space:nowrap;">75.00</div>
<div class="t" style="left:2101.50px;top:926.80px;font-size:15px;letter-spacing:-0.200px;color:#ffffff;font-style:italic;width:92.00px;overflow:hidden;white-space:nowrap;">-282.00</div>
<div class="t" style="left:6.00px;top:956.80px;font-size:15px;letter-spacing:-0.224px;color:#ffffff;font-style:italic;width:88.50px;overflow:hidden;white-space:nowrap;">Moving Avera</div>
<div class="t" style="left:104.50px;top:956.80px;font-size:15px;letter-spacing:-0.019px;color:#ffffff;font-style:italic;width:89.00px;overflow:hidden;white-space:nowrap;">6/9/2024 1:05</div>
<div class="t" style="left:202.50px;top:956.80px;font-size:15px;letter-spacing:-0.200px;color:#ffffff;font-style:italic;width:92.00px;overflow:hidden;white-space:nowrap;">USD</div>
<div class="t" style="left:301.50px;top:956.80px;font-size:15px;letter-spacing:-0.200px;color:#ffffff;font-style:italic;width:92.00px;overflow:hidden;white-space:nowrap;">-158.40</div>
<div class="t" style="left:401.50px;top:956.80px;font-size:15px;letter-spacing:-0.200px;color:#ffffff;font-style:italic;width:92.00px;overflow:hidden;white-space:nowrap;">-1.00</div>
<div class="t" style="left:501.50px;top:956.80px;font-size:15px;letter-spacing:-0.200px;color:#ffffff;font-style:italic;width:92.00px;overflow:hidden;white-space:nowrap;">0.00</div>
<div class="t" style="left:601.50px;top:956.80px;font-size:15px;letter-spacing:-0.200px;color:#ffffff;font-style:italic;width:92.00px;overflow:hidden;white-space:nowrap;">0.00</div>
<div class="t" style="left:701.50px;top:956.80px;font-size:15px;letter-spacing:-0.200px;color:#ffffff;font-style:italic;width:92.00px;overflow:hidden;white-space:nowrap;">-115.00</div>
<div class="t" style="left:801.50px;top:956.80px;font-size:15px;letter-spacing:-0.200px;color:#ffffff;font-style:italic;width:92.00px;overflow:hidden;white-space:nowrap;">5</div>
<div class="t" style="left:901.50px;top:956.80px;font-size:15px;letter-spacing:-0.200px;color:#ffffff;font-style:italic;width:92.00px;overflow:hidden;white-space:nowrap;">0</div>
<div class="t" style="left:1001.50px;top:956.80px;font-size:15px;letter-spacing:-0.200px;color:#ffffff;font-style:italic;width:92.00px;overflow:hidden;white-space:nowrap;">5</div>
<div class="t" style="left:1101.50px;top:956.80px;font-size:15px;letter-spacing:-0.200px;color:#ffffff;font-style:italic;width:92.00px;overflow:hidden;white-space:nowrap;">-31.68</div>
<div class="t" style="left:1201.50px;top:956.80px;font-size:15px;letter-spacing:-0.200px;color:#ffffff;font-style:italic;width:92.00px;overflow:hidden;white-space:nowrap;">0.00</div>
<div class="t" style="left:1301.50px;top:956.80px;font-size:15px;letter-spacing:-0.200px;color:#ffffff;font-style:italic;width:92.00px;overflow:hidden;white-space:nowrap;">-19.60</div>
<div class="t" style="left:1401.50px;top:956.80px;font-size:15px;letter-spacing:-0.200px;color:#ffffff;font-style:italic;width:92.00px;overflow:hidden;white-space:nowrap;">0.00</div>
<div class="t" style="left:1501.50px;top:956.80px;font-size:15px;letter-spacing:-0.200px;color:#ffffff;font-style:italic;width:92.00px;overflow:hidden;white-space:nowrap;">-47.00</div>
<div class="t" style="left:1601.50px;top:956.80px;font-size:15px;letter-spacing:-0.200px;color:#ffffff;font-style:italic;width:92.00px;overflow:hidden;white-space:nowrap;">0.00</div>
<div class="t" style="left:1701.50px;top:956.80px;font-size:15px;letter-spacing:-0.200px;color:#ffffff;font-style:italic;width:92.00px;overflow:hidden;white-space:nowrap;">-23.50</div>
<div class="t" style="left:1801.50px;top:956.80px;font-size:15px;letter-spacing:-0.200px;color:#ffffff;font-style:italic;width:92.00px;overflow:hidden;white-space:nowrap;">0.00</div>
<div class="t" style="left:1901.50px;top:956.80px;font-size:15px;letter-spacing:-0.200px;color:#ffffff;font-style:italic;width:92.00px;overflow:hidden;white-space:nowrap;">0.00</div>
<div class="t" style="left:2001.50px;top:956.80px;font-size:15px;letter-spacing:-0.200px;color:#ffffff;font-style:italic;width:92.00px;overflow:hidden;white-space:nowrap;">0.00</div>
<div class="t" style="left:2101.50px;top:956.80px;font-size:15px;letter-spacing:-0.200px;color:#ffffff;font-style:italic;width:92.00px;overflow:hidden;white-space:nowrap;">-158.40</div>
<div class="t" style="left:6.00px;top:986.80px;font-size:15px;letter-spacing:-0.362px;color:#ffffff;font-style:italic;width:88.50px;overflow:hidden;white-space:nowrap;">Bollinger Band</div>
<div class="t" style="left:104.50px;top:986.80px;font-size:15px;letter-spacing:-0.019px;color:#ffffff;font-style:italic;width:89.00px;overflow:hidden;white-space:nowrap;">6/9/2024 1:05</div>
<div class="t" style="left:202.50px;top:986.80px;font-size:15px;letter-spacing:-0.200px;color:#ffffff;font-style:italic;width:92.00px;overflow:hidden;white-space:nowrap;">USD</div>
<div class="t" style="left:301.50px;top:986.80px;font-size:15px;letter-spacing:-0.200px;color:#ffffff;font-style:italic;width:92.00px;overflow:hidden;white-space:nowrap;">6.10</div>
<div class="t" style="left:401.50px;top:986.80px;font-size:15px;letter-spacing:-0.200px;color:#ffffff;font-style:italic;width:92.00px;overflow:hidden;white-space:nowrap;">0.05</div>
<div class="t" style="left:501.50px;top:986.80px;font-size:15px;letter-spacing:-0.200px;color:#ffffff;font-style:italic;width:92.00px;overflow:hidden;white-space:nowrap;">1.02</div>
<div class="t" style="left:601.50px;top:986.80px;font-size:15px;letter-spacing:-0.200px;color:#ffffff;font-style:italic;width:92.00px;overflow:hidden;white-space:nowrap;">0.58</div>
<div class="t" style="left:701.50px;top:986.80px;font-size:15px;letter-spacing:-0.200px;color:#ffffff;font-style:italic;width:92.00px;overflow:hidden;white-space:nowrap;">-114.50</div>
<div class="t" style="left:801.50px;top:986.80px;font-size:15px;letter-spacing:-0.200px;color:#ffffff;font-style:italic;width:92.00px;overflow:hidden;white-space:nowrap;">118</div>
<div class="t" style="left:901.50px;top:986.80px;font-size:15px;letter-spacing:-0.200px;color:#ffffff;font-style:italic;width:92.00px;overflow:hidden;white-space:nowrap;">43</div>
<div class="t" style="left:1001.50px;top:986.80px;font-size:15px;letter-spacing:-0.200px;color:#ffffff;font-style:italic;width:92.00px;overflow:hidden;white-space:nowrap;">75</div>
<div class="t" style="left:1101.50px;top:986.80px;font-size:15px;letter-spacing:-0.200px;color:#ffffff;font-style:italic;width:92.00px;overflow:hidden;white-space:nowrap;">0.05</div>
<div class="t" style="left:1201.50px;top:986.80px;font-size:15px;letter-spacing:-0.200px;color:#ffffff;font-style:italic;width:92.00px;overflow:hidden;white-space:nowrap;">7.40</div>
<div class="t" style="left:1301.50px;top:986.80px;font-size:15px;letter-spacing:-0.200px;color:#ffffff;font-style:italic;width:92.00px;overflow:hidden;white-space:nowrap;">-5.90</div>
<div class="t" style="left:1401.50px;top:986.80px;font-size:15px;letter-spacing:-0.200px;color:#ffffff;font-style:italic;width:92.00px;overflow:hidden;white-space:nowrap;">31.60</div>
<div class="t" style="left:1501.50px;top:986.80px;font-size:15px;letter-spacing:-0.200px;color:#ffffff;font-style:italic;width:92.00px;overflow:hidden;white-space:nowrap;">-55.30</div>
<div class="t" style="left:1601.50px;top:986.80px;font-size:15px;letter-spacing:-0.200px;color:#ffffff;font-style:italic;width:92.00px;overflow:hidden;white-space:nowrap;">0.30</div>
<div class="t" style="left:1701.50px;top:986.80px;font-size:15px;letter-spacing:-0.200px;color:#ffffff;font-style:italic;width:92.00px;overflow:hidden;white-space:nowrap;">-0.20</div>
<div class="t" style="left:1801.50px;top:986.80px;font-size:15px;letter-spacing:-0.200px;color:#ffffff;font-style:italic;width:92.00px;overflow:hidden;white-space:nowrap;">0.00</div>
<div class="t" style="left:1901.50px;top:986.80px;font-size:15px;letter-spacing:-0.200px;color:#ffffff;font-style:italic;width:92.00px;overflow:hidden;white-space:nowrap;">0.00</div>
<div class="t" style="left:2001.50px;top:986.80px;font-size:15px;letter-spacing:-0.200px;color:#ffffff;font-style:italic;width:92.00px;overflow:hidden;white-space:nowrap;">37.00</div>
<div class="t" style="left:2101.50px;top:986.80px;font-size:15px;letter-spacing:-0.200px;color:#ffffff;font-style:italic;width:92.00px;overflow:hidden;white-space:nowrap;">-69.80</div>
<div class="t" style="left:6.00px;top:1016.80px;font-size:15px;letter-spacing:-0.362px;color:#ffffff;font-style:italic;width:88.50px;overflow:hidden;white-space:nowrap;">Bollinger Band</div>
<div class="t" style="left:104.50px;top:1016.80px;font-size:15px;letter-spacing:-0.019px;color:#ffffff;font-style:italic;width:89.00px;overflow:hidden;white-space:nowrap;">6/9/2024 1:05</div>
<div class="t" style="left:202.50px;top:1016.80px;font-size:15px;letter-spacing:-0.200px;color:#ffffff;font-style:italic;width:92.00px;overflow:hidden;white-space:nowrap;">USD</div>
<div class="t" style="left:301.50px;top:1016.80px;font-size:15px;letter-spacing:-0.200px;color:#ffffff;font-style:italic;width:92.00px;overflow:hidden;white-space:nowrap;">-43.80</div>
<div class="t" style="left:401.50px;top:1016.80px;font-size:15px;letter-spacing:-0.200px;color:#ffffff;font-style:italic;width:92.00px;overflow:hidden;white-space:nowrap;">-0.40</div>
<div class="t" style="left:501.50px;top:1016.80px;font-size:15px;letter-spacing:-0.200px;color:#ffffff;font-style:italic;width:92.00px;overflow:hidden;white-space:nowrap;">0.85</div>
<div class="t" style="left:601.50px;top:1016.80px;font-size:15px;letter-spacing:-0.200px;color:#ffffff;font-style:italic;width:92.00px;overflow:hidden;white-space:nowrap;">0.56</div>
<div class="t" style="left:701.50px;top:1016.80px;font-size:15px;letter-spacing:-0.200px;color:#ffffff;font-style:italic;width:92.00px;overflow:hidden;white-space:nowrap;">-109.90</div>
<div class="t" style="left:801.50px;top:1016.80px;font-size:15px;letter-spacing:-0.200px;color:#ffffff;font-style:italic;width:92.00px;overflow:hidden;white-space:nowrap;">101</div>
<div class="t" style="left:901.50px;top:1016.80px;font-size:15px;letter-spacing:-0.200px;color:#ffffff;font-style:italic;width:92.00px;overflow:hidden;white-space:nowrap;">36</div>
<div class="t" style="left:1001.50px;top:1016.80px;font-size:15px;letter-spacing:-0.200px;color:#ffffff;font-style:italic;width:92.00px;overflow:hidden;white-space:nowrap;">65</div>
<div class="t" style="left:1101.50px;top:1016.80px;font-size:15px;letter-spacing:-0.200px;color:#ffffff;font-style:italic;width:92.00px;overflow:hidden;white-space:nowrap;">-0.43</div>
<div class="t" style="left:1201.50px;top:1016.80px;font-size:15px;letter-spacing:-0.200px;color:#ffffff;font-style:italic;width:92.00px;overflow:hidden;white-space:nowrap;">6.70</div>
<div class="t" style="left:1301.50px;top:1016.80px;font-size:15px;letter-spacing:-0.200px;color:#ffffff;font-style:italic;width:92.00px;overflow:hidden;white-space:nowrap;">-6.57</div>
<div class="t" style="left:1401.50px;top:1016.80px;font-size:15px;letter-spacing:-0.200px;color:#ffffff;font-style:italic;width:92.00px;overflow:hidden;white-space:nowrap;">34.40</div>
<div class="t" style="left:1501.50px;top:1016.80px;font-size:15px;letter-spacing:-0.200px;color:#ffffff;font-style:italic;width:92.00px;overflow:hidden;white-space:nowrap;">-66.10</div>
<div class="t" style="left:1601.50px;top:1016.80px;font-size:15px;letter-spacing:-0.200px;color:#ffffff;font-style:italic;width:92.00px;overflow:hidden;white-space:nowrap;">0.10</div>
<div class="t" style="left:1701.50px;top:1016.80px;font-size:15px;letter-spacing:-0.200px;color:#ffffff;font-style:italic;width:92.00px;overflow:hidden;white-space:nowrap;">-0.10</div>
<div class="t" style="left:1801.50px;top:1016.80px;font-size:15px;letter-spacing:-0.200px;color:#ffffff;font-style:italic;width:92.00px;overflow:hidden;white-space:nowrap;">0.00</div>
<div class="t" style="left:1901.50px;top:1016.80px;font-size:15px;letter-spacing:-0.200px;color:#ffffff;font-style:italic;width:92.00px;overflow:hidden;white-space:nowrap;">0.00</div>
<div class="t" style="left:2001.50px;top:1016.80px;font-size:15px;letter-spacing:-0.200px;color:#ffffff;font-style:italic;width:92.00px;overflow:hidden;white-space:nowrap;">32.70</div>
<div class="t" style="left:2101.50px;top:1016.80px;font-size:15px;letter-spacing:-0.200px;color:#ffffff;font-style:italic;width:92.00px;overflow:hidden;white-space:nowrap;">-100.80</div>
<div class="t" style="left:6.00px;top:1046.80px;font-size:15px;letter-spacing:-0.362px;color:#ffffff;font-style:italic;width:88.50px;overflow:hidden;white-space:nowrap;">Bollinger Band</div>
<div class="t" style="left:104.50px;top:1046.80px;font-size:15px;letter-spacing:-0.019px;color:#ffffff;font-style:italic;width:89.00px;overflow:hidden;white-space:nowrap;">6/9/2024 1:05</div>
<div class="t" style="left:202.50px;top:1046.80px;font-size:15px;letter-spacing:-0.200px;color:#ffffff;font-style:italic;width:92.00px;overflow:hidden;white-space:nowrap;">USD</div>
<div class="t" style="left:301.50px;top:1046.80px;font-size:15px;letter-spacing:-0.200px;color:#ffffff;font-style:italic;width:92.00px;overflow:hidden;white-space:nowrap;">-85.60</div>
<div class="t" style="left:401.50px;top:1046.80px;font-size:15px;letter-spacing:-0.200px;color:#ffffff;font-style:italic;width:92.00px;overflow:hidden;white-space:nowrap;">-0.65</div>
<div class="t" style="left:501.50px;top:1046.80px;font-size:15px;letter-spacing:-0.200px;color:#ffffff;font-style:italic;width:92.00px;overflow:hidden;white-space:nowrap;">0.64</div>
<div class="t" style="left:601.50px;top:1046.80px;font-size:15px;letter-spacing:-0.200px;color:#ffffff;font-style:italic;width:92.00px;overflow:hidden;white-space:nowrap;">0.49</div>
<div class="t" style="left:701.50px;top:1046.80px;font-size:15px;letter-spacing:-0.200px;color:#ffffff;font-style:italic;width:92.00px;overflow:hidden;white-space:nowrap;">-139.20</div>
<div class="t" style="left:801.50px;top:1046.80px;font-size:15px;letter-spacing:-0.200px;color:#ffffff;font-style:italic;width:92.00px;overflow:hidden;white-space:nowrap;">143</div>
<div class="t" style="left:901.50px;top:1046.80px;font-size:15px;letter-spacing:-0.200px;color:#ffffff;font-style:italic;width:92.00px;overflow:hidden;white-space:nowrap;">41</div>
<div class="t" style="left:1001.50px;top:1046.80px;font-size:15px;letter-spacing:-0.200px;color:#ffffff;font-style:italic;width:92.00px;overflow:hidden;white-space:nowrap;">83</div>
<div class="t" style="left:1101.50px;top:1046.80px;font-size:15px;letter-spacing:-0.200px;color:#ffffff;font-style:italic;width:92.00px;overflow:hidden;white-space:nowrap;">-0.60</div>
<div class="t" style="left:1201.50px;top:1046.80px;font-size:15px;letter-spacing:-0.200px;color:#ffffff;font-style:italic;width:92.00px;overflow:hidden;white-space:nowrap;">3.75</div>
<div class="t" style="left:1301.50px;top:1046.80px;font-size:15px;letter-spacing:-0.200px;color:#ffffff;font-style:italic;width:92.00px;overflow:hidden;white-space:nowrap;">-2.88</div>
<div class="t" style="left:1401.50px;top:1046.80px;font-size:15px;letter-spacing:-0.200px;color:#ffffff;font-style:italic;width:92.00px;overflow:hidden;white-space:nowrap;">32.80</div>
<div class="t" style="left:1501.50px;top:1046.80px;font-size:15px;letter-spacing:-0.200px;color:#ffffff;font-style:italic;width:92.00px;overflow:hidden;white-space:nowrap;">-27.40</div>
<div class="t" style="left:1601.50px;top:1046.80px;font-size:15px;letter-spacing:-0.200px;color:#ffffff;font-style:italic;width:92.00px;overflow:hidden;white-space:nowrap;">0.10</div>
<div class="t" style="left:1701.50px;top:1046.80px;font-size:15px;letter-spacing:-0.200px;color:#ffffff;font-style:italic;width:92.00px;overflow:hidden;white-space:nowrap;">-0.10</div>
<div class="t" style="left:1801.50px;top:1046.80px;font-size:15px;letter-spacing:-0.200px;color:#ffffff;font-style:italic;width:92.00px;overflow:hidden;white-space:nowrap;">0.00</div>
<div class="t" style="left:1901.50px;top:1046.80px;font-size:15px;letter-spacing:-0.200px;color:#ffffff;font-style:italic;width:92.00px;overflow:hidden;white-space:nowrap;">0.00</div>
<div class="t" style="left:2001.50px;top:1046.80px;font-size:15px;letter-spacing:-0.200px;color:#ffffff;font-style:italic;width:92.00px;overflow:hidden;white-space:nowrap;">31.40</div>
<div class="t" style="left:2101.50px;top:1046.80px;font-size:15px;letter-spacing:-0.200px;color:#ffffff;font-style:italic;width:92.00px;overflow:hidden;white-space:nowrap;">-74.70</div>
<div class="t" style="left:6.00px;top:1076.80px;font-size:15px;letter-spacing:-0.362px;color:#ffffff;font-style:italic;width:88.50px;overflow:hidden;white-space:nowrap;">Bollinger Band</div>
<div class="t" style="left:104.50px;top:1076.80px;font-size:15px;letter-spacing:-0.019px;color:#ffffff;font-style:italic;width:89.00px;overflow:hidden;white-space:nowrap;">6/9/2024 1:05</div>
<div class="t" style="left:202.50px;top:1076.80px;font-size:15px;letter-spacing:-0.200px;color:#ffffff;font-style:italic;width:92.00px;overflow:hidden;white-space:nowrap;">USD</div>
<div class="t" style="left:301.50px;top:1076.80px;font-size:15px;letter-spacing:-0.200px;color:#ffffff;font-style:italic;width:92.00px;overflow:hidden;white-space:nowrap;">-141.50</div>
<div class="t" style="left:401.50px;top:1076.80px;font-size:15px;letter-spacing:-0.200px;color:#ffffff;font-style:italic;width:92.00px;overflow:hidden;white-space:nowrap;">-0.81</div>
<div class="t" style="left:501.50px;top:1076.80px;font-size:15px;letter-spacing:-0.200px;color:#ffffff;font-style:italic;width:92.00px;overflow:hidden;white-space:nowrap;">0.34</div>
<div class="t" style="left:601.50px;top:1076.80px;font-size:15px;letter-spacing:-0.200px;color:#ffffff;font-style:italic;width:92.00px;overflow:hidden;white-space:nowrap;">0.31</div>
<div class="t" style="left:701.50px;top:1076.80px;font-size:15px;letter-spacing:-0.200px;color:#ffffff;font-style:italic;width:92.00px;overflow:hidden;white-space:nowrap;">-142.30</div>
<div class="t" style="left:801.50px;top:1076.80px;font-size:15px;letter-spacing:-0.200px;color:#ffffff;font-style:italic;width:92.00px;overflow:hidden;white-space:nowrap;">17</div>
<div class="t" style="left:901.50px;top:1076.80px;font-size:15px;letter-spacing:-0.200px;color:#ffffff;font-style:italic;width:92.00px;overflow:hidden;white-space:nowrap;">4</div>
<div class="t" style="left:1001.50px;top:1076.80px;font-size:15px;letter-spacing:-0.200px;color:#ffffff;font-style:italic;width:92.00px;overflow:hidden;white-space:nowrap;">13</div>
<div class="t" style="left:1101.50px;top:1076.80px;font-size:15px;letter-spacing:-0.200px;color:#ffffff;font-style:italic;width:92.00px;overflow:hidden;white-space:nowrap;">-8.32</div>
<div class="t" style="left:1201.50px;top:1076.80px;font-size:15px;letter-spacing:-0.200px;color:#ffffff;font-style:italic;width:92.00px;overflow:hidden;white-space:nowrap;">18.43</div>
<div class="t" style="left:1301.50px;top:1076.80px;font-size:15px;letter-spacing:-0.200px;color:#ffffff;font-style:italic;width:92.00px;overflow:hidden;white-space:nowrap;">-16.55</div>
<div class="t" style="left:1401.50px;top:1076.80px;font-size:15px;letter-spacing:-0.200px;color:#ffffff;font-style:italic;width:92.00px;overflow:hidden;white-space:nowrap;">32.80</div>
<div class="t" style="left:1501.50px;top:1076.80px;font-size:15px;letter-spacing:-0.200px;color:#ffffff;font-style:italic;width:92.00px;overflow:hidden;white-space:nowrap;">-45.10</div>
<div class="t" style="left:1601.50px;top:1076.80px;font-size:15px;letter-spacing:-0.200px;color:#ffffff;font-style:italic;width:92.00px;overflow:hidden;white-space:nowrap;">6.00</div>
<div class="t" style="left:1701.50px;top:1076.80px;font-size:15px;letter-spacing:-0.200px;color:#ffffff;font-style:italic;width:92.00px;overflow:hidden;white-space:nowrap;">-1.30</div>
<div class="t" style="left:1801.50px;top:1076.80px;font-size:15px;letter-spacing:-0.200px;color:#ffffff;font-style:italic;width:92.00px;overflow:hidden;white-space:nowrap;">0.00</div>
<div class="t" style="left:1901.50px;top:1076.80px;font-size:15px;letter-spacing:-0.200px;color:#ffffff;font-style:italic;width:92.00px;overflow:hidden;white-space:nowrap;">0.00</div>
<div class="t" style="left:2001.50px;top:1076.80px;font-size:15px;letter-spacing:-0.200px;color:#ffffff;font-style:italic;width:92.00px;overflow:hidden;white-space:nowrap;">0.00</div>
<div class="t" style="left:2101.50px;top:1076.80px;font-size:15px;letter-spacing:-0.200px;color:#ffffff;font-style:italic;width:92.00px;overflow:hidden;white-space:nowrap;">-87.90</div>
<div class="t" style="left:6.00px;top:1106.80px;font-size:15px;letter-spacing:-0.362px;color:#ffffff;font-style:italic;width:88.50px;overflow:hidden;white-space:nowrap;">Bollinger Band</div>
<div class="t" style="left:104.50px;top:1106.80px;font-size:15px;letter-spacing:-0.019px;color:#ffffff;font-style:italic;width:89.00px;overflow:hidden;white-space:nowrap;">6/9/2024 1:05</div>
<div class="t" style="left:202.50px;top:1106.80px;font-size:15px;letter-spacing:-0.200px;color:#ffffff;font-style:italic;width:92.00px;overflow:hidden;white-space:nowrap;">USD</div>
<div class="t" style="left:301.50px;top:1106.80px;font-size:15px;letter-spacing:-0.200px;color:#ffffff;font-style:italic;width:92.00px;overflow:hidden;white-space:nowrap;">-153.20</div>
<div class="t" style="left:401.50px;top:1106.80px;font-size:15px;letter-spacing:-0.200px;color:#ffffff;font-style:italic;width:92.00px;overflow:hidden;white-space:nowrap;">-0.96</div>
<div class="t" style="left:501.50px;top:1106.80px;font-size:15px;letter-spacing:-0.200px;color:#ffffff;font-style:italic;width:92.00px;overflow:hidden;white-space:nowrap;">0.04</div>
<div class="t" style="left:601.50px;top:1106.80px;font-size:15px;letter-spacing:-0.200px;color:#ffffff;font-style:italic;width:92.00px;overflow:hidden;white-space:nowrap;">0.33</div>
<div class="t" style="left:701.50px;top:1106.80px;font-size:15px;letter-spacing:-0.200px;color:#ffffff;font-style:italic;width:92.00px;overflow:hidden;white-space:nowrap;">-135.70</div>
<div class="t" style="left:801.50px;top:1106.80px;font-size:15px;letter-spacing:-0.200px;color:#ffffff;font-style:italic;width:92.00px;overflow:hidden;white-space:nowrap;">4</div>
<div class="t" style="left:901.50px;top:1106.80px;font-size:15px;letter-spacing:-0.200px;color:#ffffff;font-style:italic;width:92.00px;overflow:hidden;white-space:nowrap;">1</div>
<div class="t" style="left:1001.50px;top:1106.80px;font-size:15px;letter-spacing:-0.200px;color:#ffffff;font-style:italic;width:92.00px;overflow:hidden;white-space:nowrap;">3</div>
<div class="t" style="left:1101.50px;top:1106.80px;font-size:15px;letter-spacing:-0.200px;color:#ffffff;font-style:italic;width:92.00px;overflow:hidden;white-space:nowrap;">-38.30</div>
<div class="t" style="left:1201.50px;top:1106.80px;font-size:15px;letter-spacing:-0.200px;color:#ffffff;font-style:italic;width:92.00px;overflow:hidden;white-space:nowrap;">6.30</div>
<div class="t" style="left:1301.50px;top:1106.80px;font-size:15px;letter-spacing:-0.200px;color:#ffffff;font-style:italic;width:92.00px;overflow:hidden;white-space:nowrap;">-53.17</div>
<div class="t" style="left:1401.50px;top:1106.80px;font-size:15px;letter-spacing:-0.200px;color:#ffffff;font-style:italic;width:92.00px;overflow:hidden;white-space:nowrap;">6.30</div>
<div class="t" style="left:1501.50px;top:1106.80px;font-size:15px;letter-spacing:-0.200px;color:#ffffff;font-style:italic;width:92.00px;overflow:hidden;white-space:nowrap;">-100.70</div>
<div class="t" style="left:1601.50px;top:1106.80px;font-size:15px;letter-spacing:-0.200px;color:#ffffff;font-style:italic;width:92.00px;overflow:hidden;white-space:nowrap;">6.30</div>
<div class="t" style="left:1701.50px;top:1106.80px;font-size:15px;letter-spacing:-0.200px;color:#ffffff;font-style:italic;width:92.00px;overflow:hidden;white-space:nowrap;">-23.80</div>
<div class="t" style="left:1801.50px;top:1106.80px;font-size:15px;letter-spacing:-0.200px;color:#ffffff;font-style:italic;width:92.00px;overflow:hidden;white-space:nowrap;">0.00</div>
<div class="t" style="left:1901.50px;top:1106.80px;font-size:15px;letter-spacing:-0.200px;color:#ffffff;font-style:italic;width:92.00px;overflow:hidden;white-space:nowrap;">0.00</div>
<div class="t" style="left:2001.50px;top:1106.80px;font-size:15px;letter-spacing:-0.200px;color:#ffffff;font-style:italic;width:92.00px;overflow:hidden;white-space:nowrap;">0.00</div>
<div class="t" style="left:2101.50px;top:1106.80px;font-size:15px;letter-spacing:-0.200px;color:#ffffff;font-style:italic;width:92.00px;overflow:hidden;white-space:nowrap;">-159.50</div>
<div class="t" style="left:6.00px;top:1136.80px;font-size:15px;letter-spacing:-0.362px;color:#ffffff;font-style:italic;width:88.50px;overflow:hidden;white-space:nowrap;">Bollinger Band</div>
<div class="t" style="left:104.50px;top:1136.80px;font-size:15px;letter-spacing:-0.019px;color:#ffffff;font-style:italic;width:89.00px;overflow:hidden;white-space:nowrap;">6/9/2024 1:05</div>
<div class="t" style="left:202.50px;top:1136.80px;font-size:15px;letter-spacing:-0.200px;color:#ffffff;font-style:italic;width:92.00px;overflow:hidden;white-space:nowrap;">USD</div>
<div class="t" style="left:301.50px;top:1136.80px;font-size:15px;letter-spacing:-0.200px;color:#ffffff;font-style:italic;width:92.00px;overflow:hidden;white-space:nowrap;">-30.00</div>
<div class="t" style="left:401.50px;top:1136.80px;font-size:15px;letter-spacing:-0.200px;color:#ffffff;font-style:italic;width:92.00px;overflow:hidden;white-space:nowrap;">-0.23</div>
<div class="t" style="left:501.50px;top:1136.80px;font-size:15px;letter-spacing:-0.200px;color:#ffffff;font-style:italic;width:92.00px;overflow:hidden;white-space:nowrap;">0.94</div>
<div class="t" style="left:601.50px;top:1136.80px;font-size:15px;letter-spacing:-0.200px;color:#ffffff;font-style:italic;width:92.00px;overflow:hidden;white-space:nowrap;">0.53</div>
<div class="t" style="left:701.50px;top:1136.80px;font-size:15px;letter-spacing:-0.200px;color:#ffffff;font-style:italic;width:92.00px;overflow:hidden;white-space:nowrap;">-129.80</div>
<div class="t" style="left:801.50px;top:1136.80px;font-size:15px;letter-spacing:-0.200px;color:#ffffff;font-style:italic;width:92.00px;overflow:hidden;white-space:nowrap;">124</div>
<div class="t" style="left:901.50px;top:1136.80px;font-size:15px;letter-spacing:-0.200px;color:#ffffff;font-style:italic;width:92.00px;overflow:hidden;white-space:nowrap;">43</div>
<div class="t" style="left:1001.50px;top:1136.80px;font-size:15px;letter-spacing:-0.200px;color:#ffffff;font-style:italic;width:92.00px;overflow:hidden;white-space:nowrap;">81</div>
<div class="t" style="left:1101.50px;top:1136.80px;font-size:15px;letter-spacing:-0.200px;color:#ffffff;font-style:italic;width:92.00px;overflow:hidden;white-space:nowrap;">-0.24</div>
<div class="t" style="left:1201.50px;top:1136.80px;font-size:15px;letter-spacing:-0.200px;color:#ffffff;font-style:italic;width:92.00px;overflow:hidden;white-space:nowrap;">10.06</div>
<div class="t" style="left:1301.50px;top:1136.80px;font-size:15px;letter-spacing:-0.200px;color:#ffffff;font-style:italic;width:92.00px;overflow:hidden;white-space:nowrap;">-5.71</div>
<div class="t" style="left:1401.50px;top:1136.80px;font-size:15px;letter-spacing:-0.200px;color:#ffffff;font-style:italic;width:92.00px;overflow:hidden;white-space:nowrap;">43.60</div>
<div class="t" style="left:1501.50px;top:1136.80px;font-size:15px;letter-spacing:-0.200px;color:#ffffff;font-style:italic;width:92.00px;overflow:hidden;white-space:nowrap;">-58.80</div>
<div class="t" style="left:1601.50px;top:1136.80px;font-size:15px;letter-spacing:-0.200px;color:#ffffff;font-style:italic;width:92.00px;overflow:hidden;white-space:nowrap;">0.10</div>
<div class="t" style="left:1701.50px;top:1136.80px;font-size:15px;letter-spacing:-0.200px;color:#ffffff;font-style:italic;width:92.00px;overflow:hidden;white-space:nowrap;">-0.10</div>
<div class="t" style="left:1801.50px;top:1136.80px;font-size:15px;letter-spacing:-0.200px;color:#ffffff;font-style:italic;width:92.00px;overflow:hidden;white-space:nowrap;">0.00</div>
<div class="t" style="left:1901.50px;top:1136.80px;font-size:15px;letter-spacing:-0.200px;color:#ffffff;font-style:italic;width:92.00px;overflow:hidden;white-space:nowrap;">0.00</div>
<div class="t" style="left:2001.50px;top:1136.80px;font-size:15px;letter-spacing:-0.200px;color:#ffffff;font-style:italic;width:92.00px;overflow:hidden;white-space:nowrap;">85.40</div>
<div class="t" style="left:2101.50px;top:1136.80px;font-size:15px;letter-spacing:-0.200px;color:#ffffff;font-style:italic;width:92.00px;overflow:hidden;white-space:nowrap;">-87.20</div>
<div class="t" style="left:6.00px;top:1166.80px;font-size:15px;letter-spacing:-0.362px;color:#ffffff;font-style:italic;width:88.50px;overflow:hidden;white-space:nowrap;">Bollinger Band</div>
<div class="t" style="left:104.50px;top:1166.80px;font-size:15px;letter-spacing:-0.019px;color:#ffffff;font-style:italic;width:89.00px;overflow:hidden;white-space:nowrap;">6/9/2024 1:05</div>
<div class="t" style="left:202.50px;top:1166.80px;font-size:15px;letter-spacing:-0.200px;color:#ffffff;font-style:italic;width:92.00px;overflow:hidden;white-space:nowrap;">USD</div>
<div class="t" style="left:301.50px;top:1166.80px;font-size:15px;letter-spacing:-0.200px;color:#ffffff;font-style:italic;width:92.00px;overflow:hidden;white-space:nowrap;">-175.00</div>
<div class="t" style="left:401.50px;top:1166.80px;font-size:15px;letter-spacing:-0.200px;color:#ffffff;font-style:italic;width:92.00px;overflow:hidden;white-space:nowrap;">-0.68</div>
<div class="t" style="left:501.50px;top:1166.80px;font-size:15px;letter-spacing:-0.200px;color:#ffffff;font-style:italic;width:92.00px;overflow:hidden;white-space:nowrap;">0.61</div>
<div class="t" style="left:601.50px;top:1166.80px;font-size:15px;letter-spacing:-0.200px;color:#ffffff;font-style:italic;width:92.00px;overflow:hidden;white-space:nowrap;">0.34</div>
<div class="t" style="left:701.50px;top:1166.80px;font-size:15px;letter-spacing:-0.200px;color:#ffffff;font-style:italic;width:92.00px;overflow:hidden;white-space:nowrap;">-260.90</div>
<div class="t" style="left:801.50px;top:1166.80px;font-size:15px;letter-spacing:-0.200px;color:#ffffff;font-style:italic;width:92.00px;overflow:hidden;white-space:nowrap;">47</div>
<div class="t" style="left:901.50px;top:1166.80px;font-size:15px;letter-spacing:-0.200px;color:#ffffff;font-style:italic;width:92.00px;overflow:hidden;white-space:nowrap;">12</div>
<div class="t" style="left:1001.50px;top:1166.80px;font-size:15px;letter-spacing:-0.200px;color:#ffffff;font-style:italic;width:92.00px;overflow:hidden;white-space:nowrap;">35</div>
<div class="t" style="left:1101.50px;top:1166.80px;font-size:15px;letter-spacing:-0.200px;color:#ffffff;font-style:italic;width:92.00px;overflow:hidden;white-space:nowrap;">-3.72</div>
<div class="t" style="left:1201.50px;top:1166.80px;font-size:15px;letter-spacing:-0.200px;color:#ffffff;font-style:italic;width:92.00px;overflow:hidden;white-space:nowrap;">22.63</div>
<div class="t" style="left:1301.50px;top:1166.80px;font-size:15px;letter-spacing:-0.200px;color:#ffffff;font-style:italic;width:92.00px;overflow:hidden;white-space:nowrap;">-12.76</div>
<div class="t" style="left:1401.50px;top:1166.80px;font-size:15px;letter-spacing:-0.200px;color:#ffffff;font-style:italic;width:92.00px;overflow:hidden;white-space:nowrap;">78.70</div>
<div class="t" style="left:1501.50px;top:1166.80px;font-size:15px;letter-spacing:-0.200px;color:#ffffff;font-style:italic;width:92.00px;overflow:hidden;white-space:nowrap;">-57.70</div>
<div class="t" style="left:1601.50px;top:1166.80px;font-size:15px;letter-spacing:-0.200px;color:#ffffff;font-style:italic;width:92.00px;overflow:hidden;white-space:nowrap;">1.90</div>
<div class="t" style="left:1701.50px;top:1166.80px;font-size:15px;letter-spacing:-0.200px;color:#ffffff;font-style:italic;width:92.00px;overflow:hidden;white-space:nowrap;">-0.20</div>
<div class="t" style="left:1801.50px;top:1166.80px;font-size:15px;letter-spacing:-0.200px;color:#ffffff;font-style:italic;width:92.00px;overflow:hidden;white-space:nowrap;">0.00</div>
<div class="t" style="left:1901.50px;top:1166.80px;font-size:15px;letter-spacing:-0.200px;color:#ffffff;font-style:italic;width:92.00px;overflow:hidden;white-space:nowrap;">0.00</div>
<div class="t" style="left:2001.50px;top:1166.80px;font-size:15px;letter-spacing:-0.200px;color:#ffffff;font-style:italic;width:92.00px;overflow:hidden;white-space:nowrap;">29.50</div>
<div class="t" style="left:2101.50px;top:1166.80px;font-size:15px;letter-spacing:-0.200px;color:#ffffff;font-style:italic;width:92.00px;overflow:hidden;white-space:nowrap;">-159.30</div>
<div class="t" style="left:6.00px;top:1196.80px;font-size:15px;letter-spacing:-0.362px;color:#ffffff;font-style:italic;width:88.50px;overflow:hidden;white-space:nowrap;">Bollinger Band</div>
<div class="t" style="left:104.50px;top:1196.80px;font-size:15px;letter-spacing:-0.019px;color:#ffffff;font-style:italic;width:89.00px;overflow:hidden;white-space:nowrap;">6/9/2024 1:05</div>
<div class="t" style="left:202.50px;top:1196.80px;font-size:15px;letter-spacing:-0.200px;color:#ffffff;font-style:italic;width:92.00px;overflow:hidden;white-space:nowrap;">USD</div>
<div class="t" style="left:301.50px;top:1196.80px;font-size:15px;letter-spacing:-0.200px;color:#ffffff;font-style:italic;width:92.00px;overflow:hidden;white-space:nowrap;">-278.40</div>
<div class="t" style="left:401.50px;top:1196.80px;font-size:15px;letter-spacing:-0.200px;color:#ffffff;font-style:italic;width:92.00px;overflow:hidden;white-space:nowrap;">-0.80</div>
<div class="t" style="left:501.50px;top:1196.80px;font-size:15px;letter-spacing:-0.200px;color:#ffffff;font-style:italic;width:92.00px;overflow:hidden;white-space:nowrap;">0.51</div>
<div class="t" style="left:601.50px;top:1196.80px;font-size:15px;letter-spacing:-0.200px;color:#ffffff;font-style:italic;width:92.00px;overflow:hidden;white-space:nowrap;">0.53</div>
<div class="t" style="left:701.50px;top:1196.80px;font-size:15px;letter-spacing:-0.200px;color:#ffffff;font-style:italic;width:92.00px;overflow:hidden;white-space:nowrap;">-363.90</div>
<div class="t" style="left:801.50px;top:1196.80px;font-size:15px;letter-spacing:-0.200px;color:#ffffff;font-style:italic;width:92.00px;overflow:hidden;white-space:nowrap;">147</div>
<div class="t" style="left:901.50px;top:1196.80px;font-size:15px;letter-spacing:-0.200px;color:#ffffff;font-style:italic;width:92.00px;overflow:hidden;white-space:nowrap;">49</div>
<div class="t" style="left:1001.50px;top:1196.80px;font-size:15px;letter-spacing:-0.200px;color:#ffffff;font-style:italic;width:92.00px;overflow:hidden;white-space:nowrap;">93</div>
<div class="t" style="left:1101.50px;top:1196.80px;font-size:15px;letter-spacing:-0.200px;color:#ffffff;font-style:italic;width:92.00px;overflow:hidden;white-space:nowrap;">-1.89</div>
<div class="t" style="left:1201.50px;top:1196.80px;font-size:15px;letter-spacing:-0.200px;color:#ffffff;font-style:italic;width:92.00px;overflow:hidden;white-space:nowrap;">5.96</div>
<div class="t" style="left:1301.50px;top:1196.80px;font-size:15px;letter-spacing:-0.200px;color:#ffffff;font-style:italic;width:92.00px;overflow:hidden;white-space:nowrap;">-6.14</div>
<div class="t" style="left:1401.50px;top:1196.80px;font-size:15px;letter-spacing:-0.200px;color:#ffffff;font-style:italic;width:92.00px;overflow:hidden;white-space:nowrap;">68.80</div>
<div class="t" style="left:1501.50px;top:1196.80px;font-size:15px;letter-spacing:-0.200px;color:#ffffff;font-style:italic;width:92.00px;overflow:hidden;white-space:nowrap;">-58.20</div>
<div class="t" style="left:1601.50px;top:1196.80px;font-size:15px;letter-spacing:-0.200px;color:#ffffff;font-style:italic;width:92.00px;overflow:hidden;white-space:nowrap;">0.10</div>
<div class="t" style="left:1701.50px;top:1196.80px;font-size:15px;letter-spacing:-0.200px;color:#ffffff;font-style:italic;width:92.00px;overflow:hidden;white-space:nowrap;">-0.10</div>
<div class="t" style="left:1801.50px;top:1196.80px;font-size:15px;letter-spacing:-0.200px;color:#ffffff;font-style:italic;width:92.00px;overflow:hidden;white-space:nowrap;">0.00</div>
<div class="t" style="left:1901.50px;top:1196.80px;font-size:15px;letter-spacing:-0.200px;color:#ffffff;font-style:italic;width:92.00px;overflow:hidden;white-space:nowrap;">0.00</div>
<div class="t" style="left:2001.50px;top:1196.80px;font-size:15px;letter-spacing:-0.200px;color:#ffffff;font-style:italic;width:92.00px;overflow:hidden;white-space:nowrap;">48.30</div>
<div class="t" style="left:2101.50px;top:1196.80px;font-size:15px;letter-spacing:-0.200px;color:#ffffff;font-style:italic;width:92.00px;overflow:hidden;white-space:nowrap;">-149.20</div>
<div class="t" style="left:6.00px;top:1226.80px;font-size:15px;letter-spacing:-0.362px;color:#ffffff;font-style:italic;width:88.50px;overflow:hidden;white-space:nowrap;">Bollinger Band</div>
<div class="t" style="left:104.50px;top:1226.80px;font-size:15px;letter-spacing:-0.019px;color:#ffffff;font-style:italic;width:89.00px;overflow:hidden;white-space:nowrap;">6/9/2024 1:05</div>
<div class="t" style="left:202.50px;top:1226.80px;font-size:15px;letter-spacing:-0.200px;color:#ffffff;font-style:italic;width:92.00px;overflow:hidden;white-space:nowrap;">USD</div>
<div class="t" style="left:301.50px;top:1226.80px;font-size:15px;letter-spacing:-0.200px;color:#ffffff;font-style:italic;width:92.00px;overflow:hidden;white-space:nowrap;">-192.90</div>
<div class="t" style="left:401.50px;top:1226.80px;font-size:15px;letter-spacing:-0.200px;color:#ffffff;font-style:italic;width:92.00px;overflow:hidden;white-space:nowrap;">-0.94</div>
<div class="t" style="left:501.50px;top:1226.80px;font-size:15px;letter-spacing:-0.200px;color:#ffffff;font-style:italic;width:92.00px;overflow:hidden;white-space:nowrap;">0.53</div>
<div class="t" style="left:601.50px;top:1226.80px;font-size:15px;letter-spacing:-0.200px;color:#ffffff;font-style:italic;width:92.00px;overflow:hidden;white-space:nowrap;">0.66</div>
<div class="t" style="left:701.50px;top:1226.80px;font-size:15px;letter-spacing:-0.200px;color:#ffffff;font-style:italic;width:92.00px;overflow:hidden;white-space:nowrap;">-177.70</div>
<div class="t" style="left:801.50px;top:1226.80px;font-size:15px;letter-spacing:-0.200px;color:#ffffff;font-style:italic;width:92.00px;overflow:hidden;white-space:nowrap;">255</div>
<div class="t" style="left:901.50px;top:1226.80px;font-size:15px;letter-spacing:-0.200px;color:#ffffff;font-style:italic;width:92.00px;overflow:hidden;white-space:nowrap;">94</div>
<div class="t" style="left:1001.50px;top:1226.80px;font-size:15px;letter-spacing:-0.200px;color:#ffffff;font-style:italic;width:92.00px;overflow:hidden;white-space:nowrap;">142</div>
<div class="t" style="left:1101.50px;top:1226.80px;font-size:15px;letter-spacing:-0.200px;color:#ffffff;font-style:italic;width:92.00px;overflow:hidden;white-space:nowrap;">-0.76</div>
<div class="t" style="left:1201.50px;top:1226.80px;font-size:15px;letter-spacing:-0.200px;color:#ffffff;font-style:italic;width:92.00px;overflow:hidden;white-space:nowrap;">2.27</div>
<div class="t" style="left:1301.50px;top:1226.80px;font-size:15px;letter-spacing:-0.200px;color:#ffffff;font-style:italic;width:92.00px;overflow:hidden;white-space:nowrap;">-2.86</div>
<div class="t" style="left:1401.50px;top:1226.80px;font-size:15px;letter-spacing:-0.200px;color:#ffffff;font-style:italic;width:92.00px;overflow:hidden;white-space:nowrap;">21.40</div>
<div class="t" style="left:1501.50px;top:1226.80px;font-size:15px;letter-spacing:-0.200px;color:#ffffff;font-style:italic;width:92.00px;overflow:hidden;white-space:nowrap;">-66.90</div>
<div class="t" style="left:1601.50px;top:1226.80px;font-size:15px;letter-spacing:-0.200px;color:#ffffff;font-style:italic;width:92.00px;overflow:hidden;white-space:nowrap;">0.10</div>
<div class="t" style="left:1701.50px;top:1226.80px;font-size:15px;letter-spacing:-0.200px;color:#ffffff;font-style:italic;width:92.00px;overflow:hidden;white-space:nowrap;">-0.10</div>
<div class="t" style="left:1801.50px;top:1226.80px;font-size:15px;letter-spacing:-0.200px;color:#ffffff;font-style:italic;width:92.00px;overflow:hidden;white-space:nowrap;">0.00</div>
<div class="t" style="left:1901.50px;top:1226.80px;font-size:15px;letter-spacing:-0.200px;color:#ffffff;font-style:italic;width:92.00px;overflow:hidden;white-space:nowrap;">0.00</div>
<div class="t" style="left:2001.50px;top:1226.80px;font-size:15px;letter-spacing:-0.200px;color:#ffffff;font-style:italic;width:92.00px;overflow:hidden;white-space:nowrap;">33.50</div>
<div class="t" style="left:2101.50px;top:1226.80px;font-size:15px;letter-spacing:-0.200px;color:#ffffff;font-style:italic;width:92.00px;overflow:hidden;white-space:nowrap;">-119.90</div>
<div class="t" style="left:6.00px;top:1256.80px;font-size:15px;letter-spacing:-0.362px;color:#ffffff;font-style:italic;width:88.50px;overflow:hidden;white-space:nowrap;">Bollinger Band</div>
<div class="t" style="left:104.50px;top:1256.80px;font-size:15px;letter-spacing:-0.019px;color:#ffffff;font-style:italic;width:89.00px;overflow:hidden;white-space:nowrap;">6/9/2024 1:05</div>
<div class="t" style="left:202.50px;top:1256.80px;font-size:15px;letter-spacing:-0.200px;color:#ffffff;font-style:italic;width:92.00px;overflow:hidden;white-space:nowrap;">USD</div>
<div class="t" style="left:301.50px;top:1256.80px;font-size:15px;letter-spacing:-0.200px;color:#ffffff;font-style:italic;width:92.00px;overflow:hidden;white-space:nowrap;">-152.40</div>
<div class="t" style="left:401.50px;top:1256.80px;font-size:15px;letter-spacing:-0.200px;color:#ffffff;font-style:italic;width:92.00px;overflow:hidden;white-space:nowrap;">-0.98</div>
<div class="t" style="left:501.50px;top:1256.80px;font-size:15px;letter-spacing:-0.200px;color:#ffffff;font-style:italic;width:92.00px;overflow:hidden;white-space:nowrap;">0.05</div>
<div class="t" style="left:601.50px;top:1256.80px;font-size:15px;letter-spacing:-0.200px;color:#ffffff;font-style:italic;width:92.00px;overflow:hidden;white-space:nowrap;">0.67</div>
<div class="t" style="left:701.50px;top:1256.80px;font-size:15px;letter-spacing:-0.200px;color:#ffffff;font-style:italic;width:92.00px;overflow:hidden;white-space:nowrap;">-108.50</div>
<div class="t" style="left:801.50px;top:1256.80px;font-size:15px;letter-spacing:-0.200px;color:#ffffff;font-style:italic;width:92.00px;overflow:hidden;white-space:nowrap;">5</div>
<div class="t" style="left:901.50px;top:1256.80px;font-size:15px;letter-spacing:-0.200px;color:#ffffff;font-style:italic;width:92.00px;overflow:hidden;white-space:nowrap;">2</div>
<div class="t" style="left:1001.50px;top:1256.80px;font-size:15px;letter-spacing:-0.200px;color:#ffffff;font-style:italic;width:92.00px;overflow:hidden;white-space:nowrap;">3</div>
<div class="t" style="left:1101.50px;top:1256.80px;font-size:15px;letter-spacing:-0.200px;color:#ffffff;font-style:italic;width:92.00px;overflow:hidden;white-space:nowrap;">-30.48</div>
<div class="t" style="left:1201.50px;top:1256.80px;font-size:15px;letter-spacing:-0.200px;color:#ffffff;font-style:italic;width:92.00px;overflow:hidden;white-space:nowrap;">4.00</div>
<div class="t" style="left:1301.50px;top:1256.80px;font-size:15px;letter-spacing:-0.200px;color:#ffffff;font-style:italic;width:92.00px;overflow:hidden;white-space:nowrap;">-53.47</div>
<div class="t" style="left:1401.50px;top:1256.80px;font-size:15px;letter-spacing:-0.200px;color:#ffffff;font-style:italic;width:92.00px;overflow:hidden;white-space:nowrap;">4.30</div>
<div class="t" style="left:1501.50px;top:1256.80px;font-size:15px;letter-spacing:-0.200px;color:#ffffff;font-style:italic;width:92.00px;overflow:hidden;white-space:nowrap;">-75.80</div>
<div class="t" style="left:1601.50px;top:1256.80px;font-size:15px;letter-spacing:-0.200px;color:#ffffff;font-style:italic;width:92.00px;overflow:hidden;white-space:nowrap;">3.70</div>
<div class="t" style="left:1701.50px;top:1256.80px;font-size:15px;letter-spacing:-0.200px;color:#ffffff;font-style:italic;width:92.00px;overflow:hidden;white-space:nowrap;">-32.70</div>
<div class="t" style="left:1801.50px;top:1256.80px;font-size:15px;letter-spacing:-0.200px;color:#ffffff;font-style:italic;width:92.00px;overflow:hidden;white-space:nowrap;">0.00</div>
<div class="t" style="left:1901.50px;top:1256.80px;font-size:15px;letter-spacing:-0.200px;color:#ffffff;font-style:italic;width:92.00px;overflow:hidden;white-space:nowrap;">0.00</div>
<div class="t" style="left:2001.50px;top:1256.80px;font-size:15px;letter-spacing:-0.200px;color:#ffffff;font-style:italic;width:92.00px;overflow:hidden;white-space:nowrap;">0.00</div>
<div class="t" style="left:2101.50px;top:1256.80px;font-size:15px;letter-spacing:-0.200px;color:#ffffff;font-style:italic;width:92.00px;overflow:hidden;white-space:nowrap;">-108.50</div>
<div class="a" style="left:99px;top:681px;width:1px;height:600px;background:#5a5a5a;"></div>
<div class="a" style="left:198px;top:681px;width:1px;height:600px;background:#2f2f2f;"></div>
<div class="a" style="left:296px;top:681px;width:1px;height:600px;background:#2f2f2f;"></div>
<div class="a" style="left:396px;top:681px;width:1px;height:600px;background:#2f2f2f;"></div>
<div class="a" style="left:496px;top:681px;width:1px;height:600px;background:#2f2f2f;"></div>
<div class="a" style="left:596px;top:681px;width:1px;height:600px;background:#2f2f2f;"></div>
<div class="a" style="left:696px;top:681px;width:1px;height:600px;background:#2f2f2f;"></div>
<div class="a" style="left:796px;top:681px;width:1px;height:600px;background:#2f2f2f;"></div>
<div class="a" style="left:896px;top:681px;width:1px;height:600px;background:#2f2f2f;"></div>
<div class="a" style="left:996px;top:681px;width:1px;height:600px;background:#2f2f2f;"></div>
<div class="a" style="left:1096px;top:681px;width:1px;height:600px;background:#2f2f2f;"></div>
<div class="a" style="left:1196px;top:681px;width:1px;height:600px;background:#2f2f2f;"></div>
<div class="a" style="left:1296px;top:681px;width:1px;height:600px;background:#2f2f2f;"></div>
<div class="a" style="left:1396px;top:681px;width:1px;height:600px;background:#2f2f2f;"></div>
<div class="a" style="left:1496px;top:681px;width:1px;height:600px;background:#2f2f2f;"></div>
<div class="a" style="left:1596px;top:681px;width:1px;height:600px;background:#2f2f2f;"></div>
<div class="a" style="left:1696px;top:681px;width:1px;height:600px;background:#2f2f2f;"></div>
<div class="a" style="left:1796px;top:681px;width:1px;height:600px;background:#2f2f2f;"></div>
<div class="a" style="left:1896px;top:681px;width:1px;height:600px;background:#2f2f2f;"></div>
<div class="a" style="left:1996px;top:681px;width:1px;height:600px;background:#2f2f2f;"></div>
<div class="a" style="left:2096px;top:681px;width:1px;height:600px;background:#2f2f2f;"></div>
<div class="a" style="left:2196px;top:681px;width:1px;height:600px;background:#2f2f2f;"></div>
<div class="a" style="left:2196px;top:681px;width:1px;height:600px;background:#2f2f2f;"></div>
<div class="a" style="left:0px;top:646px;width:1px;height:635px;background:#2a2a2a;"></div>
<div class="a" style="left:0px;top:710px;width:2197px;height:1px;background:#2f2f2f;"></div>
<div class="a" style="left:0px;top:740px;width:2197px;height:1px;background:#2f2f2f;"></div>
<div class="a" style="left:0px;top:770px;width:2197px;height:1px;background:#2f2f2f;"></div>
<div class="a" style="left:0px;top:800px;width:2197px;height:1px;background:#2f2f2f;"></div>
<div class="a" style="left:0px;top:830px;width:2197px;height:1px;background:#2f2f2f;"></div>
<div class="a" style="left:0px;top:860px;width:2197px;height:1px;background:#2f2f2f;"></div>
<div class="a" style="left:0px;top:890px;width:2197px;height:1px;background:#2f2f2f;"></div>
<div class="a" style="left:0px;top:920px;width:2197px;height:1px;background:#2f2f2f;"></div>
<div class="a" style="left:0px;top:950px;width:2197px;height:1px;background:#2f2f2f;"></div>
<div class="a" style="left:0px;top:980px;width:2197px;height:1px;background:#2f2f2f;"></div>
<div class="a" style="left:0px;top:1010px;width:2197px;height:1px;background:#2f2f2f;"></div>
<div class="a" style="left:0px;top:1040px;width:2197px;height:1px;background:#2f2f2f;"></div>
<div class="a" style="left:0px;top:1070px;width:2197px;height:1px;background:#2f2f2f;"></div>
<div class="a" style="left:0px;top:1100px;width:2197px;height:1px;background:#2f2f2f;"></div>
<div class="a" style="left:0px;top:1130px;width:2197px;height:1px;background:#2f2f2f;"></div>
<div class="a" style="left:0px;top:1160px;width:2197px;height:1px;background:#2f2f2f;"></div>
<div class="a" style="left:0px;top:1190px;width:2197px;height:1px;background:#2f2f2f;"></div>
<div class="a" style="left:0px;top:1220px;width:2197px;height:1px;background:#2f2f2f;"></div>
<div class="a" style="left:0px;top:1250px;width:2197px;height:1px;background:#2f2f2f;"></div>
<div class="a" style="left:0px;top:1280px;width:2197px;height:1px;background:#2f2f2f;"></div>
<div class="a" style="left:100px;top:1252px;width:97px;height:28px;background:transparent;border:1px solid #d8d8d8;box-sizing:border-box"></div>
<div class="a" style="left:847px;top:737px;width:473px;height:295px;background:#212121;border:1px solid #2e2e2e;box-sizing:border-box;box-shadow:0 1px 5px rgba(0,0,0,0.5)"></div>
<div class="a" style="left:847px;top:737px;width:473px;height:34.5px;background:#000;"></div>
<div class="t" style="left:857.30px;top:745.30px;font-size:15px;letter-spacing:-0.108px;color:#f2f2f2;">Group the Statements</div>
<svg class="a" style="left:1294px;top:748px" width="14" height="14"><path d="M1.5 1.5L12.5 12.5M12.5 1.5L1.5 12.5" stroke="#f0f0f0" stroke-width="1.6"/></svg>
<div class="t" style="left:877.20px;top:801.60px;font-size:15px;letter-spacing:-0.051px;">Please enter new group name or select from the existing one.</div>
<div class="t" style="left:887.60px;top:853.30px;font-size:15px;letter-spacing:-0.103px;">New Group:</div>
<div class="a" style="left:978px;top:849px;width:250px;height:28px;background:#232325;border:1px solid #2a6fd0;box-sizing:border-box"></div>
<div class="t" style="left:986.00px;top:853.30px;font-size:15px;letter-spacing:-0.533px;">Backtest MA &amp; BB EUR GBP</div>
<div class="a" style="left:1167.3px;top:855px;width:1px;height:16px;background:#e8e8e8;"></div>
<div class="t" style="left:1073.25px;top:885.80px;font-size:15px;letter-spacing:-1.000px;">OR</div>
<div class="t" style="left:885.40px;top:916.80px;font-size:15px;letter-spacing:-0.212px;">Select Group</div>
<div class="a" style="left:978px;top:912px;width:250px;height:27px;background:#262628;border:1px solid #38383c;box-sizing:border-box"></div>
<svg class="a" style="left:1213px;top:922px" width="10" height="6"><path d="M0.5 0.5H8.5L4.5 5Z" fill="#3e3e42"/></svg>
<div class="a" style="left:849px;top:985.5px;width:470px;height:2px;background:#e6e6e6;"></div>
<div class="a" style="left:1054px;top:996px;width:125px;height:27px;background:#262628;border:1px solid #34343a;box-sizing:border-box"></div>
<div class="a" style="left:1186px;top:996px;width:125px;height:27px;background:#262628;border:1px solid #34343a;box-sizing:border-box"></div>
<div class="t" style="left:1105.75px;top:1000.80px;font-size:15px;letter-spacing:-0.586px;">OK</div>
<div class="t" style="left:1226.30px;top:1000.80px;font-size:15px;letter-spacing:-0.449px;">Cancel</div>
</body></html>
